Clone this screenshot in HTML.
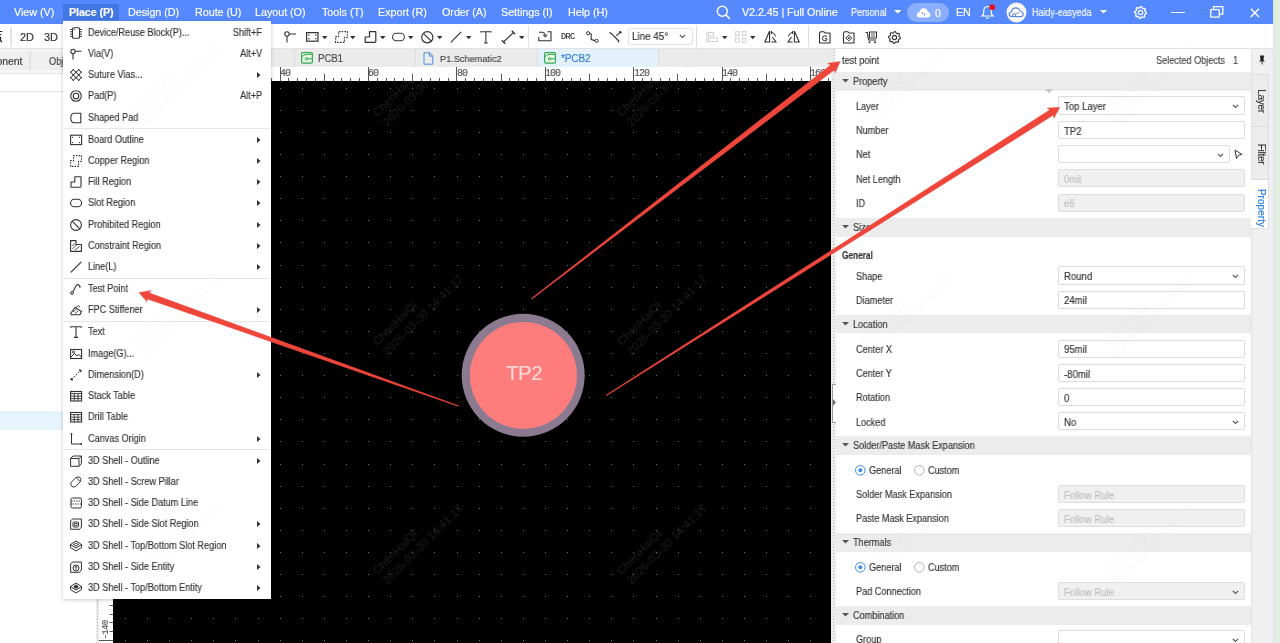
<!DOCTYPE html>
<html><head><meta charset="utf-8"><title>EasyEDA Pro</title>
<style>
html,body{margin:0;padding:0;width:1280px;height:643px;overflow:hidden;background:#fff;}
body{position:relative;font-family:'Liberation Sans',sans-serif;}
.t{position:absolute;white-space:nowrap;will-change:transform;-webkit-text-stroke:0.15px currentColor;}
.w{position:absolute;white-space:nowrap;}
.r{position:absolute;box-sizing:border-box;}
.s{position:absolute;overflow:visible;}
</style></head><body>

<div class="r" style="left:1273.00px;top:0.00px;width:7.00px;height:643.00px;background:#e3eee1;"></div>
<div class="r" style="left:1272.50px;top:0.00px;width:1.00px;height:643.00px;background:#d6e6f5;"></div>
<div class="r" style="left:0.00px;top:0.00px;width:1273.00px;height:24.00px;background:#5589fd;"></div>
<div class="r" style="left:0.00px;top:24.00px;width:1273.00px;height:24.00px;background:#fff;"></div>
<div class="r" style="left:0.00px;top:48.00px;width:1273.00px;height:1.00px;background:#e2e2e2;"></div>
<div class="r" style="left:0.00px;top:49.00px;width:96.00px;height:594.00px;background:#fff;"></div>
<div class="r" style="left:0.00px;top:49.00px;width:96.00px;height:3.00px;background:#f3f3f3;"></div>
<div class="r" style="left:0.00px;top:52.00px;width:96.00px;height:18.00px;background:#efefef;"></div>
<div class="r" style="left:29.00px;top:52.00px;width:2.00px;height:18.00px;background:#e2e2e2;"></div>
<div class="r" style="left:0.00px;top:70.00px;width:96.00px;height:4.00px;background:#f6f6f6;border-bottom:1px solid #e6e6e6;"></div>
<div class="t" style="left:-31.00px;top:51.00px;font-size:10.5px;line-height:21.0px;color:#3a3a3a;letter-spacing:-0.1px;font-weight:normal;font-family:'Liberation Sans', sans-serif;">Component</div>
<div class="t" style="left:48.60px;top:51.00px;font-size:10.5px;line-height:21.0px;color:#3a3a3a;letter-spacing:0px;font-weight:normal;font-family:'Liberation Sans', sans-serif;transform:scaleX(0.876);transform-origin:left center;">Obj</div>
<div class="r" style="left:0.00px;top:91.00px;width:96.00px;height:1.00px;background:#e3e3e3;"></div>
<div class="r" style="left:0.00px;top:411.00px;width:96.00px;height:19.00px;background:#e6f4fe;"></div>
<div class="r" style="left:96.00px;top:49.00px;width:3.00px;height:594.00px;background:#ececec;"></div>
<div class="r" style="left:97px;top:49px;width:1px;height:594px;background:repeating-linear-gradient(#bdbdbd 0 1px,transparent 1px 3px);"></div>
<div class="r" style="left:99.00px;top:49.00px;width:731.50px;height:18.00px;background:#ebebeb;"></div>
<div class="r" style="left:294.00px;top:49.00px;width:1.00px;height:18.00px;background:#dcdcdc;"></div>
<div class="r" style="left:415.00px;top:49.00px;width:1.00px;height:18.00px;background:#dcdcdc;"></div>
<div class="r" style="left:537.00px;top:49.00px;width:1.00px;height:18.00px;background:#dcdcdc;"></div>
<div class="r" style="left:658.00px;top:49.00px;width:1.00px;height:18.00px;background:#dcdcdc;"></div>
<div class="r" style="left:538.00px;top:49.00px;width:120.00px;height:18.00px;background:#e3f1fd;"></div>
<svg class="s" style="left:301.00px;top:52.00px;" width="12" height="12" viewBox="0 0 12 12"><rect x="0.6" y="0.6" width="10.8" height="10.6" rx="1.2" fill="#e9f9e6" stroke="#35a852" stroke-width="1.2"/><path d="M0.6 5.2 Q2.5 2.4 6 2.4 L11.4 2.4" fill="none" stroke="#35a852" stroke-width="1"/><circle cx="5.6" cy="6.8" r="1.3" fill="none" stroke="#35a852" stroke-width="1"/><path d="M6.9 6.8 L11.4 6.8" stroke="#35a852" stroke-width="1"/></svg>
<div class="t" style="left:318.00px;top:48.50px;font-size:10px;line-height:20px;color:#444;letter-spacing:0px;font-weight:normal;font-family:'Liberation Sans', sans-serif;transform:scaleX(0.957);transform-origin:left center;">PCB1</div>
<svg class="s" style="left:423.00px;top:52.00px;" width="11" height="13" viewBox="0 0 11 13"><path d="M1 0.8 L6.5 0.8 L9.8 4.1 L9.8 12.2 L1 12.2 Z" fill="none" stroke="#4a90e2" stroke-width="1"/><path d="M6.5 0.8 L6.5 4.1 L9.8 4.1" fill="none" stroke="#4a90e2" stroke-width="1"/></svg>
<div class="t" style="left:439.50px;top:48.90px;font-size:9.6px;line-height:19.2px;color:#444;letter-spacing:0px;font-weight:normal;font-family:'Liberation Sans', sans-serif;transform:scaleX(0.955);transform-origin:left center;">P1.Schematic2</div>
<svg class="s" style="left:544.00px;top:52.00px;" width="12" height="12" viewBox="0 0 12 12"><rect x="0.6" y="0.6" width="10.8" height="10.6" rx="1.2" fill="#e9f9e6" stroke="#35a852" stroke-width="1.2"/><path d="M0.6 5.2 Q2.5 2.4 6 2.4 L11.4 2.4" fill="none" stroke="#35a852" stroke-width="1"/><circle cx="5.6" cy="6.8" r="1.3" fill="none" stroke="#35a852" stroke-width="1"/><path d="M6.9 6.8 L11.4 6.8" stroke="#35a852" stroke-width="1"/></svg>
<div class="t" style="left:561.00px;top:48.50px;font-size:10px;line-height:20px;color:#2f7fd8;letter-spacing:-0.1px;font-weight:normal;font-family:'Liberation Sans', sans-serif;">*PCB2</div>
<div class="r" style="left:830.50px;top:49.00px;width:5.50px;height:594.00px;background:#eeeeee;"></div>
<div class="r" style="left:833px;top:49px;width:1px;height:594px;background:repeating-linear-gradient(#b8b8b8 0 1px,transparent 1px 3px);"></div>
<div class="r" style="left:832.00px;top:384.00px;width:4.00px;height:38.50px;background:#fff;border:1px solid #9a9a9a;border-right:none;"></div>
<svg class="s" style="left:832.60px;top:399.00px;" width="3" height="7" viewBox="0 0 3 7"><path d="M0 0 L2.8 3.5 L0 7 Z" fill="#6a6a6a"/></svg>
<div class="r" style="left:99.00px;top:67.00px;width:731.50px;height:14.00px;background:#fff;"></div>
<div class="r" style="left:99.00px;top:81.00px;width:14.00px;height:562.00px;background:#fff;"></div>
<div class="r" style="left:113.00px;top:81.00px;width:717.50px;height:562.00px;background:#000;"></div>
<svg class="s" style="left:113.00px;top:67.00px;" width="718" height="14" viewBox="0 0 718 14"><rect x="7" y="11" width="1" height="3" fill="#555"/><rect x="16" y="11" width="1" height="3" fill="#555"/><rect x="25" y="11" width="1" height="3" fill="#555"/><rect x="34" y="7" width="1" height="7" fill="#555"/><rect x="43" y="11" width="1" height="3" fill="#555"/><rect x="52" y="11" width="1" height="3" fill="#555"/><rect x="60" y="11" width="1" height="3" fill="#555"/><rect x="69" y="11" width="1" height="3" fill="#555"/><rect x="78" y="0" width="1" height="14" fill="#555"/><rect x="87" y="11" width="1" height="3" fill="#555"/><rect x="96" y="11" width="1" height="3" fill="#555"/><rect x="105" y="11" width="1" height="3" fill="#555"/><rect x="113" y="11" width="1" height="3" fill="#555"/><rect x="122" y="7" width="1" height="7" fill="#555"/><rect x="131" y="11" width="1" height="3" fill="#555"/><rect x="140" y="11" width="1" height="3" fill="#555"/><rect x="149" y="11" width="1" height="3" fill="#555"/><rect x="158" y="11" width="1" height="3" fill="#555"/><rect x="167" y="0" width="1" height="14" fill="#555"/><rect x="175" y="11" width="1" height="3" fill="#555"/><rect x="184" y="11" width="1" height="3" fill="#555"/><rect x="193" y="11" width="1" height="3" fill="#555"/><rect x="202" y="11" width="1" height="3" fill="#555"/><rect x="211" y="7" width="1" height="7" fill="#555"/><rect x="220" y="11" width="1" height="3" fill="#555"/><rect x="228" y="11" width="1" height="3" fill="#555"/><rect x="237" y="11" width="1" height="3" fill="#555"/><rect x="246" y="11" width="1" height="3" fill="#555"/><rect x="255" y="0" width="1" height="14" fill="#555"/><rect x="264" y="11" width="1" height="3" fill="#555"/><rect x="273" y="11" width="1" height="3" fill="#555"/><rect x="281" y="11" width="1" height="3" fill="#555"/><rect x="290" y="11" width="1" height="3" fill="#555"/><rect x="299" y="7" width="1" height="7" fill="#555"/><rect x="308" y="11" width="1" height="3" fill="#555"/><rect x="317" y="11" width="1" height="3" fill="#555"/><rect x="326" y="11" width="1" height="3" fill="#555"/><rect x="335" y="11" width="1" height="3" fill="#555"/><rect x="343" y="0" width="1" height="14" fill="#555"/><rect x="352" y="11" width="1" height="3" fill="#555"/><rect x="361" y="11" width="1" height="3" fill="#555"/><rect x="370" y="11" width="1" height="3" fill="#555"/><rect x="379" y="11" width="1" height="3" fill="#555"/><rect x="388" y="7" width="1" height="7" fill="#555"/><rect x="396" y="11" width="1" height="3" fill="#555"/><rect x="405" y="11" width="1" height="3" fill="#555"/><rect x="414" y="11" width="1" height="3" fill="#555"/><rect x="423" y="11" width="1" height="3" fill="#555"/><rect x="432" y="0" width="1" height="14" fill="#555"/><rect x="441" y="11" width="1" height="3" fill="#555"/><rect x="449" y="11" width="1" height="3" fill="#555"/><rect x="458" y="11" width="1" height="3" fill="#555"/><rect x="467" y="11" width="1" height="3" fill="#555"/><rect x="476" y="7" width="1" height="7" fill="#555"/><rect x="485" y="11" width="1" height="3" fill="#555"/><rect x="494" y="11" width="1" height="3" fill="#555"/><rect x="503" y="11" width="1" height="3" fill="#555"/><rect x="511" y="11" width="1" height="3" fill="#555"/><rect x="520" y="0" width="1" height="14" fill="#555"/><rect x="529" y="11" width="1" height="3" fill="#555"/><rect x="538" y="11" width="1" height="3" fill="#555"/><rect x="547" y="11" width="1" height="3" fill="#555"/><rect x="556" y="11" width="1" height="3" fill="#555"/><rect x="564" y="7" width="1" height="7" fill="#555"/><rect x="573" y="11" width="1" height="3" fill="#555"/><rect x="582" y="11" width="1" height="3" fill="#555"/><rect x="591" y="11" width="1" height="3" fill="#555"/><rect x="600" y="11" width="1" height="3" fill="#555"/><rect x="609" y="0" width="1" height="14" fill="#555"/><rect x="617" y="11" width="1" height="3" fill="#555"/><rect x="626" y="11" width="1" height="3" fill="#555"/><rect x="635" y="11" width="1" height="3" fill="#555"/><rect x="644" y="11" width="1" height="3" fill="#555"/><rect x="653" y="7" width="1" height="7" fill="#555"/><rect x="662" y="11" width="1" height="3" fill="#555"/><rect x="671" y="11" width="1" height="3" fill="#555"/><rect x="679" y="11" width="1" height="3" fill="#555"/><rect x="688" y="11" width="1" height="3" fill="#555"/><rect x="697" y="0" width="1" height="14" fill="#555"/><rect x="706" y="11" width="1" height="3" fill="#555"/><rect x="715" y="11" width="1" height="3" fill="#555"/></svg>
<div class="r" style="left:113px;top:67px;width:717.5px;height:14px;overflow:hidden;"><div class="r" style="left:-113px;top:-67px;width:1280px;height:643px;">
<div class="t" style="left:279.90px;top:64.40px;font-size:10px;line-height:20px;color:#555;letter-spacing:-1.0px;font-weight:normal;font-family:'Liberation Mono', monospace;">40</div>
<div class="t" style="left:368.33px;top:64.40px;font-size:10px;line-height:20px;color:#555;letter-spacing:-1.0px;font-weight:normal;font-family:'Liberation Mono', monospace;">60</div>
<div class="t" style="left:456.76px;top:64.40px;font-size:10px;line-height:20px;color:#555;letter-spacing:-1.0px;font-weight:normal;font-family:'Liberation Mono', monospace;">80</div>
<div class="t" style="left:545.19px;top:64.40px;font-size:10px;line-height:20px;color:#555;letter-spacing:-1.0px;font-weight:normal;font-family:'Liberation Mono', monospace;">100</div>
<div class="t" style="left:633.62px;top:64.40px;font-size:10px;line-height:20px;color:#555;letter-spacing:-1.0px;font-weight:normal;font-family:'Liberation Mono', monospace;">120</div>
<div class="t" style="left:722.05px;top:64.40px;font-size:10px;line-height:20px;color:#555;letter-spacing:-1.0px;font-weight:normal;font-family:'Liberation Mono', monospace;">140</div>
<div class="t" style="left:810.48px;top:64.40px;font-size:10px;line-height:20px;color:#555;letter-spacing:-1.0px;font-weight:normal;font-family:'Liberation Mono', monospace;">160</div>
</div></div>
<svg class="s" style="left:99.00px;top:81.00px;" width="14" height="562" viewBox="0 0 14 562"><rect x="0" y="559" width="14" height="1" fill="#555"/><rect x="10.5" y="550" width="3.5" height="1" fill="#555"/><rect x="10.5" y="541" width="3.5" height="1" fill="#555"/><rect x="10.5" y="533" width="3.5" height="1" fill="#555"/><rect x="10.5" y="524" width="3.5" height="1" fill="#555"/><rect x="7" y="515" width="7" height="1" fill="#555"/><rect x="10.5" y="506" width="3.5" height="1" fill="#555"/><rect x="10.5" y="497" width="3.5" height="1" fill="#555"/><rect x="10.5" y="488" width="3.5" height="1" fill="#555"/><rect x="10.5" y="480" width="3.5" height="1" fill="#555"/><rect x="0" y="471" width="14" height="1" fill="#555"/><rect x="10.5" y="462" width="3.5" height="1" fill="#555"/><rect x="10.5" y="453" width="3.5" height="1" fill="#555"/><rect x="10.5" y="444" width="3.5" height="1" fill="#555"/><rect x="10.5" y="435" width="3.5" height="1" fill="#555"/><rect x="7" y="426" width="7" height="1" fill="#555"/><rect x="10.5" y="418" width="3.5" height="1" fill="#555"/><rect x="10.5" y="409" width="3.5" height="1" fill="#555"/><rect x="10.5" y="400" width="3.5" height="1" fill="#555"/><rect x="10.5" y="391" width="3.5" height="1" fill="#555"/><rect x="0" y="382" width="14" height="1" fill="#555"/><rect x="10.5" y="373" width="3.5" height="1" fill="#555"/><rect x="10.5" y="365" width="3.5" height="1" fill="#555"/><rect x="10.5" y="356" width="3.5" height="1" fill="#555"/><rect x="10.5" y="347" width="3.5" height="1" fill="#555"/><rect x="7" y="338" width="7" height="1" fill="#555"/><rect x="10.5" y="329" width="3.5" height="1" fill="#555"/><rect x="10.5" y="320" width="3.5" height="1" fill="#555"/><rect x="10.5" y="311" width="3.5" height="1" fill="#555"/><rect x="10.5" y="303" width="3.5" height="1" fill="#555"/><rect x="0" y="294" width="14" height="1" fill="#555"/><rect x="10.5" y="285" width="3.5" height="1" fill="#555"/><rect x="10.5" y="276" width="3.5" height="1" fill="#555"/><rect x="10.5" y="267" width="3.5" height="1" fill="#555"/><rect x="10.5" y="258" width="3.5" height="1" fill="#555"/><rect x="7" y="250" width="7" height="1" fill="#555"/><rect x="10.5" y="241" width="3.5" height="1" fill="#555"/><rect x="10.5" y="232" width="3.5" height="1" fill="#555"/><rect x="10.5" y="223" width="3.5" height="1" fill="#555"/><rect x="10.5" y="214" width="3.5" height="1" fill="#555"/><rect x="0" y="205" width="14" height="1" fill="#555"/><rect x="10.5" y="197" width="3.5" height="1" fill="#555"/><rect x="10.5" y="188" width="3.5" height="1" fill="#555"/><rect x="10.5" y="179" width="3.5" height="1" fill="#555"/><rect x="10.5" y="170" width="3.5" height="1" fill="#555"/><rect x="7" y="161" width="7" height="1" fill="#555"/><rect x="10.5" y="152" width="3.5" height="1" fill="#555"/><rect x="10.5" y="143" width="3.5" height="1" fill="#555"/><rect x="10.5" y="135" width="3.5" height="1" fill="#555"/><rect x="10.5" y="126" width="3.5" height="1" fill="#555"/><rect x="0" y="117" width="14" height="1" fill="#555"/><rect x="10.5" y="108" width="3.5" height="1" fill="#555"/><rect x="10.5" y="99" width="3.5" height="1" fill="#555"/><rect x="10.5" y="90" width="3.5" height="1" fill="#555"/><rect x="10.5" y="82" width="3.5" height="1" fill="#555"/><rect x="7" y="73" width="7" height="1" fill="#555"/><rect x="10.5" y="64" width="3.5" height="1" fill="#555"/><rect x="10.5" y="55" width="3.5" height="1" fill="#555"/><rect x="10.5" y="46" width="3.5" height="1" fill="#555"/><rect x="10.5" y="37" width="3.5" height="1" fill="#555"/><rect x="0" y="29" width="14" height="1" fill="#555"/><rect x="10.5" y="20" width="3.5" height="1" fill="#555"/><rect x="10.5" y="11" width="3.5" height="1" fill="#555"/><rect x="10.5" y="2" width="3.5" height="1" fill="#555"/></svg>
<div class="t" style="left:94px;top:624.5px;width:24px;height:10px;font-size:9px;line-height:10px;color:#555;letter-spacing:-0.6px;font-family:'Liberation Mono',monospace;transform:rotate(-90deg);text-align:center;">-140</div>
<svg class="s" style="left:113.00px;top:81.00px;" width="718" height="562" viewBox="0 0 718 562"><g fill="#6c6c6c"><rect x="12" y="7" width="1" height="1"/><rect x="12" y="29" width="1" height="1"/><rect x="12" y="51" width="1" height="1"/><rect x="12" y="73" width="1" height="1"/><rect x="12" y="95" width="1" height="1"/><rect x="12" y="117" width="1" height="1"/><rect x="12" y="139" width="1" height="1"/><rect x="12" y="161" width="1" height="1"/><rect x="12" y="184" width="1" height="1"/><rect x="12" y="206" width="1" height="1"/><rect x="12" y="228" width="1" height="1"/><rect x="12" y="250" width="1" height="1"/><rect x="12" y="272" width="1" height="1"/><rect x="12" y="294" width="1" height="1"/><rect x="12" y="316" width="1" height="1"/><rect x="12" y="338" width="1" height="1"/><rect x="12" y="360" width="1" height="1"/><rect x="12" y="383" width="1" height="1"/><rect x="12" y="405" width="1" height="1"/><rect x="12" y="427" width="1" height="1"/><rect x="12" y="449" width="1" height="1"/><rect x="12" y="471" width="1" height="1"/><rect x="12" y="493" width="1" height="1"/><rect x="12" y="515" width="1" height="1"/><rect x="12" y="537" width="1" height="1"/><rect x="12" y="559" width="1" height="1"/><rect x="34" y="7" width="1" height="1"/><rect x="34" y="29" width="1" height="1"/><rect x="34" y="51" width="1" height="1"/><rect x="34" y="73" width="1" height="1"/><rect x="34" y="95" width="1" height="1"/><rect x="34" y="117" width="1" height="1"/><rect x="34" y="139" width="1" height="1"/><rect x="34" y="161" width="1" height="1"/><rect x="34" y="184" width="1" height="1"/><rect x="34" y="206" width="1" height="1"/><rect x="34" y="228" width="1" height="1"/><rect x="34" y="250" width="1" height="1"/><rect x="34" y="272" width="1" height="1"/><rect x="34" y="294" width="1" height="1"/><rect x="34" y="316" width="1" height="1"/><rect x="34" y="338" width="1" height="1"/><rect x="34" y="360" width="1" height="1"/><rect x="34" y="383" width="1" height="1"/><rect x="34" y="405" width="1" height="1"/><rect x="34" y="427" width="1" height="1"/><rect x="34" y="449" width="1" height="1"/><rect x="34" y="471" width="1" height="1"/><rect x="34" y="493" width="1" height="1"/><rect x="34" y="515" width="1" height="1"/><rect x="34" y="537" width="1" height="1"/><rect x="34" y="559" width="1" height="1"/><rect x="56" y="7" width="1" height="1"/><rect x="56" y="29" width="1" height="1"/><rect x="56" y="51" width="1" height="1"/><rect x="56" y="73" width="1" height="1"/><rect x="56" y="95" width="1" height="1"/><rect x="56" y="117" width="1" height="1"/><rect x="56" y="139" width="1" height="1"/><rect x="56" y="161" width="1" height="1"/><rect x="56" y="184" width="1" height="1"/><rect x="56" y="206" width="1" height="1"/><rect x="56" y="228" width="1" height="1"/><rect x="56" y="250" width="1" height="1"/><rect x="56" y="272" width="1" height="1"/><rect x="56" y="294" width="1" height="1"/><rect x="56" y="316" width="1" height="1"/><rect x="56" y="338" width="1" height="1"/><rect x="56" y="360" width="1" height="1"/><rect x="56" y="383" width="1" height="1"/><rect x="56" y="405" width="1" height="1"/><rect x="56" y="427" width="1" height="1"/><rect x="56" y="449" width="1" height="1"/><rect x="56" y="471" width="1" height="1"/><rect x="56" y="493" width="1" height="1"/><rect x="56" y="515" width="1" height="1"/><rect x="56" y="537" width="1" height="1"/><rect x="56" y="559" width="1" height="1"/><rect x="78" y="7" width="1" height="1"/><rect x="78" y="29" width="1" height="1"/><rect x="78" y="51" width="1" height="1"/><rect x="78" y="73" width="1" height="1"/><rect x="78" y="95" width="1" height="1"/><rect x="78" y="117" width="1" height="1"/><rect x="78" y="139" width="1" height="1"/><rect x="78" y="161" width="1" height="1"/><rect x="78" y="184" width="1" height="1"/><rect x="78" y="206" width="1" height="1"/><rect x="78" y="228" width="1" height="1"/><rect x="78" y="250" width="1" height="1"/><rect x="78" y="272" width="1" height="1"/><rect x="78" y="294" width="1" height="1"/><rect x="78" y="316" width="1" height="1"/><rect x="78" y="338" width="1" height="1"/><rect x="78" y="360" width="1" height="1"/><rect x="78" y="383" width="1" height="1"/><rect x="78" y="405" width="1" height="1"/><rect x="78" y="427" width="1" height="1"/><rect x="78" y="449" width="1" height="1"/><rect x="78" y="471" width="1" height="1"/><rect x="78" y="493" width="1" height="1"/><rect x="78" y="515" width="1" height="1"/><rect x="78" y="537" width="1" height="1"/><rect x="78" y="559" width="1" height="1"/><rect x="100" y="7" width="1" height="1"/><rect x="100" y="29" width="1" height="1"/><rect x="100" y="51" width="1" height="1"/><rect x="100" y="73" width="1" height="1"/><rect x="100" y="95" width="1" height="1"/><rect x="100" y="117" width="1" height="1"/><rect x="100" y="139" width="1" height="1"/><rect x="100" y="161" width="1" height="1"/><rect x="100" y="184" width="1" height="1"/><rect x="100" y="206" width="1" height="1"/><rect x="100" y="228" width="1" height="1"/><rect x="100" y="250" width="1" height="1"/><rect x="100" y="272" width="1" height="1"/><rect x="100" y="294" width="1" height="1"/><rect x="100" y="316" width="1" height="1"/><rect x="100" y="338" width="1" height="1"/><rect x="100" y="360" width="1" height="1"/><rect x="100" y="383" width="1" height="1"/><rect x="100" y="405" width="1" height="1"/><rect x="100" y="427" width="1" height="1"/><rect x="100" y="449" width="1" height="1"/><rect x="100" y="471" width="1" height="1"/><rect x="100" y="493" width="1" height="1"/><rect x="100" y="515" width="1" height="1"/><rect x="100" y="537" width="1" height="1"/><rect x="100" y="559" width="1" height="1"/><rect x="122" y="7" width="1" height="1"/><rect x="122" y="29" width="1" height="1"/><rect x="122" y="51" width="1" height="1"/><rect x="122" y="73" width="1" height="1"/><rect x="122" y="95" width="1" height="1"/><rect x="122" y="117" width="1" height="1"/><rect x="122" y="139" width="1" height="1"/><rect x="122" y="161" width="1" height="1"/><rect x="122" y="184" width="1" height="1"/><rect x="122" y="206" width="1" height="1"/><rect x="122" y="228" width="1" height="1"/><rect x="122" y="250" width="1" height="1"/><rect x="122" y="272" width="1" height="1"/><rect x="122" y="294" width="1" height="1"/><rect x="122" y="316" width="1" height="1"/><rect x="122" y="338" width="1" height="1"/><rect x="122" y="360" width="1" height="1"/><rect x="122" y="383" width="1" height="1"/><rect x="122" y="405" width="1" height="1"/><rect x="122" y="427" width="1" height="1"/><rect x="122" y="449" width="1" height="1"/><rect x="122" y="471" width="1" height="1"/><rect x="122" y="493" width="1" height="1"/><rect x="122" y="515" width="1" height="1"/><rect x="122" y="537" width="1" height="1"/><rect x="122" y="559" width="1" height="1"/><rect x="145" y="7" width="1" height="1"/><rect x="145" y="29" width="1" height="1"/><rect x="145" y="51" width="1" height="1"/><rect x="145" y="73" width="1" height="1"/><rect x="145" y="95" width="1" height="1"/><rect x="145" y="117" width="1" height="1"/><rect x="145" y="139" width="1" height="1"/><rect x="145" y="161" width="1" height="1"/><rect x="145" y="184" width="1" height="1"/><rect x="145" y="206" width="1" height="1"/><rect x="145" y="228" width="1" height="1"/><rect x="145" y="250" width="1" height="1"/><rect x="145" y="272" width="1" height="1"/><rect x="145" y="294" width="1" height="1"/><rect x="145" y="316" width="1" height="1"/><rect x="145" y="338" width="1" height="1"/><rect x="145" y="360" width="1" height="1"/><rect x="145" y="383" width="1" height="1"/><rect x="145" y="405" width="1" height="1"/><rect x="145" y="427" width="1" height="1"/><rect x="145" y="449" width="1" height="1"/><rect x="145" y="471" width="1" height="1"/><rect x="145" y="493" width="1" height="1"/><rect x="145" y="515" width="1" height="1"/><rect x="145" y="537" width="1" height="1"/><rect x="145" y="559" width="1" height="1"/><rect x="167" y="7" width="1" height="1"/><rect x="167" y="29" width="1" height="1"/><rect x="167" y="51" width="1" height="1"/><rect x="167" y="73" width="1" height="1"/><rect x="167" y="95" width="1" height="1"/><rect x="167" y="117" width="1" height="1"/><rect x="167" y="139" width="1" height="1"/><rect x="167" y="161" width="1" height="1"/><rect x="167" y="184" width="1" height="1"/><rect x="167" y="206" width="1" height="1"/><rect x="167" y="228" width="1" height="1"/><rect x="167" y="250" width="1" height="1"/><rect x="167" y="272" width="1" height="1"/><rect x="167" y="294" width="1" height="1"/><rect x="167" y="316" width="1" height="1"/><rect x="167" y="338" width="1" height="1"/><rect x="167" y="360" width="1" height="1"/><rect x="167" y="383" width="1" height="1"/><rect x="167" y="405" width="1" height="1"/><rect x="167" y="427" width="1" height="1"/><rect x="167" y="449" width="1" height="1"/><rect x="167" y="471" width="1" height="1"/><rect x="167" y="493" width="1" height="1"/><rect x="167" y="515" width="1" height="1"/><rect x="167" y="537" width="1" height="1"/><rect x="167" y="559" width="1" height="1"/><rect x="189" y="7" width="1" height="1"/><rect x="189" y="29" width="1" height="1"/><rect x="189" y="51" width="1" height="1"/><rect x="189" y="73" width="1" height="1"/><rect x="189" y="95" width="1" height="1"/><rect x="189" y="117" width="1" height="1"/><rect x="189" y="139" width="1" height="1"/><rect x="189" y="161" width="1" height="1"/><rect x="189" y="184" width="1" height="1"/><rect x="189" y="206" width="1" height="1"/><rect x="189" y="228" width="1" height="1"/><rect x="189" y="250" width="1" height="1"/><rect x="189" y="272" width="1" height="1"/><rect x="189" y="294" width="1" height="1"/><rect x="189" y="316" width="1" height="1"/><rect x="189" y="338" width="1" height="1"/><rect x="189" y="360" width="1" height="1"/><rect x="189" y="383" width="1" height="1"/><rect x="189" y="405" width="1" height="1"/><rect x="189" y="427" width="1" height="1"/><rect x="189" y="449" width="1" height="1"/><rect x="189" y="471" width="1" height="1"/><rect x="189" y="493" width="1" height="1"/><rect x="189" y="515" width="1" height="1"/><rect x="189" y="537" width="1" height="1"/><rect x="189" y="559" width="1" height="1"/><rect x="211" y="7" width="1" height="1"/><rect x="211" y="29" width="1" height="1"/><rect x="211" y="51" width="1" height="1"/><rect x="211" y="73" width="1" height="1"/><rect x="211" y="95" width="1" height="1"/><rect x="211" y="117" width="1" height="1"/><rect x="211" y="139" width="1" height="1"/><rect x="211" y="161" width="1" height="1"/><rect x="211" y="184" width="1" height="1"/><rect x="211" y="206" width="1" height="1"/><rect x="211" y="228" width="1" height="1"/><rect x="211" y="250" width="1" height="1"/><rect x="211" y="272" width="1" height="1"/><rect x="211" y="294" width="1" height="1"/><rect x="211" y="316" width="1" height="1"/><rect x="211" y="338" width="1" height="1"/><rect x="211" y="360" width="1" height="1"/><rect x="211" y="383" width="1" height="1"/><rect x="211" y="405" width="1" height="1"/><rect x="211" y="427" width="1" height="1"/><rect x="211" y="449" width="1" height="1"/><rect x="211" y="471" width="1" height="1"/><rect x="211" y="493" width="1" height="1"/><rect x="211" y="515" width="1" height="1"/><rect x="211" y="537" width="1" height="1"/><rect x="211" y="559" width="1" height="1"/><rect x="233" y="7" width="1" height="1"/><rect x="233" y="29" width="1" height="1"/><rect x="233" y="51" width="1" height="1"/><rect x="233" y="73" width="1" height="1"/><rect x="233" y="95" width="1" height="1"/><rect x="233" y="117" width="1" height="1"/><rect x="233" y="139" width="1" height="1"/><rect x="233" y="161" width="1" height="1"/><rect x="233" y="184" width="1" height="1"/><rect x="233" y="206" width="1" height="1"/><rect x="233" y="228" width="1" height="1"/><rect x="233" y="250" width="1" height="1"/><rect x="233" y="272" width="1" height="1"/><rect x="233" y="294" width="1" height="1"/><rect x="233" y="316" width="1" height="1"/><rect x="233" y="338" width="1" height="1"/><rect x="233" y="360" width="1" height="1"/><rect x="233" y="383" width="1" height="1"/><rect x="233" y="405" width="1" height="1"/><rect x="233" y="427" width="1" height="1"/><rect x="233" y="449" width="1" height="1"/><rect x="233" y="471" width="1" height="1"/><rect x="233" y="493" width="1" height="1"/><rect x="233" y="515" width="1" height="1"/><rect x="233" y="537" width="1" height="1"/><rect x="233" y="559" width="1" height="1"/><rect x="255" y="7" width="1" height="1"/><rect x="255" y="29" width="1" height="1"/><rect x="255" y="51" width="1" height="1"/><rect x="255" y="73" width="1" height="1"/><rect x="255" y="95" width="1" height="1"/><rect x="255" y="117" width="1" height="1"/><rect x="255" y="139" width="1" height="1"/><rect x="255" y="161" width="1" height="1"/><rect x="255" y="184" width="1" height="1"/><rect x="255" y="206" width="1" height="1"/><rect x="255" y="228" width="1" height="1"/><rect x="255" y="250" width="1" height="1"/><rect x="255" y="272" width="1" height="1"/><rect x="255" y="294" width="1" height="1"/><rect x="255" y="316" width="1" height="1"/><rect x="255" y="338" width="1" height="1"/><rect x="255" y="360" width="1" height="1"/><rect x="255" y="383" width="1" height="1"/><rect x="255" y="405" width="1" height="1"/><rect x="255" y="427" width="1" height="1"/><rect x="255" y="449" width="1" height="1"/><rect x="255" y="471" width="1" height="1"/><rect x="255" y="493" width="1" height="1"/><rect x="255" y="515" width="1" height="1"/><rect x="255" y="537" width="1" height="1"/><rect x="255" y="559" width="1" height="1"/><rect x="277" y="7" width="1" height="1"/><rect x="277" y="29" width="1" height="1"/><rect x="277" y="51" width="1" height="1"/><rect x="277" y="73" width="1" height="1"/><rect x="277" y="95" width="1" height="1"/><rect x="277" y="117" width="1" height="1"/><rect x="277" y="139" width="1" height="1"/><rect x="277" y="161" width="1" height="1"/><rect x="277" y="184" width="1" height="1"/><rect x="277" y="206" width="1" height="1"/><rect x="277" y="228" width="1" height="1"/><rect x="277" y="250" width="1" height="1"/><rect x="277" y="272" width="1" height="1"/><rect x="277" y="294" width="1" height="1"/><rect x="277" y="316" width="1" height="1"/><rect x="277" y="338" width="1" height="1"/><rect x="277" y="360" width="1" height="1"/><rect x="277" y="383" width="1" height="1"/><rect x="277" y="405" width="1" height="1"/><rect x="277" y="427" width="1" height="1"/><rect x="277" y="449" width="1" height="1"/><rect x="277" y="471" width="1" height="1"/><rect x="277" y="493" width="1" height="1"/><rect x="277" y="515" width="1" height="1"/><rect x="277" y="537" width="1" height="1"/><rect x="277" y="559" width="1" height="1"/><rect x="299" y="7" width="1" height="1"/><rect x="299" y="29" width="1" height="1"/><rect x="299" y="51" width="1" height="1"/><rect x="299" y="73" width="1" height="1"/><rect x="299" y="95" width="1" height="1"/><rect x="299" y="117" width="1" height="1"/><rect x="299" y="139" width="1" height="1"/><rect x="299" y="161" width="1" height="1"/><rect x="299" y="184" width="1" height="1"/><rect x="299" y="206" width="1" height="1"/><rect x="299" y="228" width="1" height="1"/><rect x="299" y="250" width="1" height="1"/><rect x="299" y="272" width="1" height="1"/><rect x="299" y="294" width="1" height="1"/><rect x="299" y="316" width="1" height="1"/><rect x="299" y="338" width="1" height="1"/><rect x="299" y="360" width="1" height="1"/><rect x="299" y="383" width="1" height="1"/><rect x="299" y="405" width="1" height="1"/><rect x="299" y="427" width="1" height="1"/><rect x="299" y="449" width="1" height="1"/><rect x="299" y="471" width="1" height="1"/><rect x="299" y="493" width="1" height="1"/><rect x="299" y="515" width="1" height="1"/><rect x="299" y="537" width="1" height="1"/><rect x="299" y="559" width="1" height="1"/><rect x="321" y="7" width="1" height="1"/><rect x="321" y="29" width="1" height="1"/><rect x="321" y="51" width="1" height="1"/><rect x="321" y="73" width="1" height="1"/><rect x="321" y="95" width="1" height="1"/><rect x="321" y="117" width="1" height="1"/><rect x="321" y="139" width="1" height="1"/><rect x="321" y="161" width="1" height="1"/><rect x="321" y="184" width="1" height="1"/><rect x="321" y="206" width="1" height="1"/><rect x="321" y="228" width="1" height="1"/><rect x="321" y="250" width="1" height="1"/><rect x="321" y="272" width="1" height="1"/><rect x="321" y="294" width="1" height="1"/><rect x="321" y="316" width="1" height="1"/><rect x="321" y="338" width="1" height="1"/><rect x="321" y="360" width="1" height="1"/><rect x="321" y="383" width="1" height="1"/><rect x="321" y="405" width="1" height="1"/><rect x="321" y="427" width="1" height="1"/><rect x="321" y="449" width="1" height="1"/><rect x="321" y="471" width="1" height="1"/><rect x="321" y="493" width="1" height="1"/><rect x="321" y="515" width="1" height="1"/><rect x="321" y="537" width="1" height="1"/><rect x="321" y="559" width="1" height="1"/><rect x="344" y="7" width="1" height="1"/><rect x="344" y="29" width="1" height="1"/><rect x="344" y="51" width="1" height="1"/><rect x="344" y="73" width="1" height="1"/><rect x="344" y="95" width="1" height="1"/><rect x="344" y="117" width="1" height="1"/><rect x="344" y="139" width="1" height="1"/><rect x="344" y="161" width="1" height="1"/><rect x="344" y="184" width="1" height="1"/><rect x="344" y="206" width="1" height="1"/><rect x="344" y="228" width="1" height="1"/><rect x="344" y="250" width="1" height="1"/><rect x="344" y="272" width="1" height="1"/><rect x="344" y="294" width="1" height="1"/><rect x="344" y="316" width="1" height="1"/><rect x="344" y="338" width="1" height="1"/><rect x="344" y="360" width="1" height="1"/><rect x="344" y="383" width="1" height="1"/><rect x="344" y="405" width="1" height="1"/><rect x="344" y="427" width="1" height="1"/><rect x="344" y="449" width="1" height="1"/><rect x="344" y="471" width="1" height="1"/><rect x="344" y="493" width="1" height="1"/><rect x="344" y="515" width="1" height="1"/><rect x="344" y="537" width="1" height="1"/><rect x="344" y="559" width="1" height="1"/><rect x="366" y="7" width="1" height="1"/><rect x="366" y="29" width="1" height="1"/><rect x="366" y="51" width="1" height="1"/><rect x="366" y="73" width="1" height="1"/><rect x="366" y="95" width="1" height="1"/><rect x="366" y="117" width="1" height="1"/><rect x="366" y="139" width="1" height="1"/><rect x="366" y="161" width="1" height="1"/><rect x="366" y="184" width="1" height="1"/><rect x="366" y="206" width="1" height="1"/><rect x="366" y="228" width="1" height="1"/><rect x="366" y="250" width="1" height="1"/><rect x="366" y="272" width="1" height="1"/><rect x="366" y="294" width="1" height="1"/><rect x="366" y="316" width="1" height="1"/><rect x="366" y="338" width="1" height="1"/><rect x="366" y="360" width="1" height="1"/><rect x="366" y="383" width="1" height="1"/><rect x="366" y="405" width="1" height="1"/><rect x="366" y="427" width="1" height="1"/><rect x="366" y="449" width="1" height="1"/><rect x="366" y="471" width="1" height="1"/><rect x="366" y="493" width="1" height="1"/><rect x="366" y="515" width="1" height="1"/><rect x="366" y="537" width="1" height="1"/><rect x="366" y="559" width="1" height="1"/><rect x="388" y="7" width="1" height="1"/><rect x="388" y="29" width="1" height="1"/><rect x="388" y="51" width="1" height="1"/><rect x="388" y="73" width="1" height="1"/><rect x="388" y="95" width="1" height="1"/><rect x="388" y="117" width="1" height="1"/><rect x="388" y="139" width="1" height="1"/><rect x="388" y="161" width="1" height="1"/><rect x="388" y="184" width="1" height="1"/><rect x="388" y="206" width="1" height="1"/><rect x="388" y="228" width="1" height="1"/><rect x="388" y="250" width="1" height="1"/><rect x="388" y="272" width="1" height="1"/><rect x="388" y="294" width="1" height="1"/><rect x="388" y="316" width="1" height="1"/><rect x="388" y="338" width="1" height="1"/><rect x="388" y="360" width="1" height="1"/><rect x="388" y="383" width="1" height="1"/><rect x="388" y="405" width="1" height="1"/><rect x="388" y="427" width="1" height="1"/><rect x="388" y="449" width="1" height="1"/><rect x="388" y="471" width="1" height="1"/><rect x="388" y="493" width="1" height="1"/><rect x="388" y="515" width="1" height="1"/><rect x="388" y="537" width="1" height="1"/><rect x="388" y="559" width="1" height="1"/><rect x="410" y="7" width="1" height="1"/><rect x="410" y="29" width="1" height="1"/><rect x="410" y="51" width="1" height="1"/><rect x="410" y="73" width="1" height="1"/><rect x="410" y="95" width="1" height="1"/><rect x="410" y="117" width="1" height="1"/><rect x="410" y="139" width="1" height="1"/><rect x="410" y="161" width="1" height="1"/><rect x="410" y="184" width="1" height="1"/><rect x="410" y="206" width="1" height="1"/><rect x="410" y="228" width="1" height="1"/><rect x="410" y="250" width="1" height="1"/><rect x="410" y="272" width="1" height="1"/><rect x="410" y="294" width="1" height="1"/><rect x="410" y="316" width="1" height="1"/><rect x="410" y="338" width="1" height="1"/><rect x="410" y="360" width="1" height="1"/><rect x="410" y="383" width="1" height="1"/><rect x="410" y="405" width="1" height="1"/><rect x="410" y="427" width="1" height="1"/><rect x="410" y="449" width="1" height="1"/><rect x="410" y="471" width="1" height="1"/><rect x="410" y="493" width="1" height="1"/><rect x="410" y="515" width="1" height="1"/><rect x="410" y="537" width="1" height="1"/><rect x="410" y="559" width="1" height="1"/><rect x="432" y="7" width="1" height="1"/><rect x="432" y="29" width="1" height="1"/><rect x="432" y="51" width="1" height="1"/><rect x="432" y="73" width="1" height="1"/><rect x="432" y="95" width="1" height="1"/><rect x="432" y="117" width="1" height="1"/><rect x="432" y="139" width="1" height="1"/><rect x="432" y="161" width="1" height="1"/><rect x="432" y="184" width="1" height="1"/><rect x="432" y="206" width="1" height="1"/><rect x="432" y="228" width="1" height="1"/><rect x="432" y="250" width="1" height="1"/><rect x="432" y="272" width="1" height="1"/><rect x="432" y="294" width="1" height="1"/><rect x="432" y="316" width="1" height="1"/><rect x="432" y="338" width="1" height="1"/><rect x="432" y="360" width="1" height="1"/><rect x="432" y="383" width="1" height="1"/><rect x="432" y="405" width="1" height="1"/><rect x="432" y="427" width="1" height="1"/><rect x="432" y="449" width="1" height="1"/><rect x="432" y="471" width="1" height="1"/><rect x="432" y="493" width="1" height="1"/><rect x="432" y="515" width="1" height="1"/><rect x="432" y="537" width="1" height="1"/><rect x="432" y="559" width="1" height="1"/><rect x="454" y="7" width="1" height="1"/><rect x="454" y="29" width="1" height="1"/><rect x="454" y="51" width="1" height="1"/><rect x="454" y="73" width="1" height="1"/><rect x="454" y="95" width="1" height="1"/><rect x="454" y="117" width="1" height="1"/><rect x="454" y="139" width="1" height="1"/><rect x="454" y="161" width="1" height="1"/><rect x="454" y="184" width="1" height="1"/><rect x="454" y="206" width="1" height="1"/><rect x="454" y="228" width="1" height="1"/><rect x="454" y="250" width="1" height="1"/><rect x="454" y="272" width="1" height="1"/><rect x="454" y="294" width="1" height="1"/><rect x="454" y="316" width="1" height="1"/><rect x="454" y="338" width="1" height="1"/><rect x="454" y="360" width="1" height="1"/><rect x="454" y="383" width="1" height="1"/><rect x="454" y="405" width="1" height="1"/><rect x="454" y="427" width="1" height="1"/><rect x="454" y="449" width="1" height="1"/><rect x="454" y="471" width="1" height="1"/><rect x="454" y="493" width="1" height="1"/><rect x="454" y="515" width="1" height="1"/><rect x="454" y="537" width="1" height="1"/><rect x="454" y="559" width="1" height="1"/><rect x="476" y="7" width="1" height="1"/><rect x="476" y="29" width="1" height="1"/><rect x="476" y="51" width="1" height="1"/><rect x="476" y="73" width="1" height="1"/><rect x="476" y="95" width="1" height="1"/><rect x="476" y="117" width="1" height="1"/><rect x="476" y="139" width="1" height="1"/><rect x="476" y="161" width="1" height="1"/><rect x="476" y="184" width="1" height="1"/><rect x="476" y="206" width="1" height="1"/><rect x="476" y="228" width="1" height="1"/><rect x="476" y="250" width="1" height="1"/><rect x="476" y="272" width="1" height="1"/><rect x="476" y="294" width="1" height="1"/><rect x="476" y="316" width="1" height="1"/><rect x="476" y="338" width="1" height="1"/><rect x="476" y="360" width="1" height="1"/><rect x="476" y="383" width="1" height="1"/><rect x="476" y="405" width="1" height="1"/><rect x="476" y="427" width="1" height="1"/><rect x="476" y="449" width="1" height="1"/><rect x="476" y="471" width="1" height="1"/><rect x="476" y="493" width="1" height="1"/><rect x="476" y="515" width="1" height="1"/><rect x="476" y="537" width="1" height="1"/><rect x="476" y="559" width="1" height="1"/><rect x="498" y="7" width="1" height="1"/><rect x="498" y="29" width="1" height="1"/><rect x="498" y="51" width="1" height="1"/><rect x="498" y="73" width="1" height="1"/><rect x="498" y="95" width="1" height="1"/><rect x="498" y="117" width="1" height="1"/><rect x="498" y="139" width="1" height="1"/><rect x="498" y="161" width="1" height="1"/><rect x="498" y="184" width="1" height="1"/><rect x="498" y="206" width="1" height="1"/><rect x="498" y="228" width="1" height="1"/><rect x="498" y="250" width="1" height="1"/><rect x="498" y="272" width="1" height="1"/><rect x="498" y="294" width="1" height="1"/><rect x="498" y="316" width="1" height="1"/><rect x="498" y="338" width="1" height="1"/><rect x="498" y="360" width="1" height="1"/><rect x="498" y="383" width="1" height="1"/><rect x="498" y="405" width="1" height="1"/><rect x="498" y="427" width="1" height="1"/><rect x="498" y="449" width="1" height="1"/><rect x="498" y="471" width="1" height="1"/><rect x="498" y="493" width="1" height="1"/><rect x="498" y="515" width="1" height="1"/><rect x="498" y="537" width="1" height="1"/><rect x="498" y="559" width="1" height="1"/><rect x="520" y="7" width="1" height="1"/><rect x="520" y="29" width="1" height="1"/><rect x="520" y="51" width="1" height="1"/><rect x="520" y="73" width="1" height="1"/><rect x="520" y="95" width="1" height="1"/><rect x="520" y="117" width="1" height="1"/><rect x="520" y="139" width="1" height="1"/><rect x="520" y="161" width="1" height="1"/><rect x="520" y="184" width="1" height="1"/><rect x="520" y="206" width="1" height="1"/><rect x="520" y="228" width="1" height="1"/><rect x="520" y="250" width="1" height="1"/><rect x="520" y="272" width="1" height="1"/><rect x="520" y="294" width="1" height="1"/><rect x="520" y="316" width="1" height="1"/><rect x="520" y="338" width="1" height="1"/><rect x="520" y="360" width="1" height="1"/><rect x="520" y="383" width="1" height="1"/><rect x="520" y="405" width="1" height="1"/><rect x="520" y="427" width="1" height="1"/><rect x="520" y="449" width="1" height="1"/><rect x="520" y="471" width="1" height="1"/><rect x="520" y="493" width="1" height="1"/><rect x="520" y="515" width="1" height="1"/><rect x="520" y="537" width="1" height="1"/><rect x="520" y="559" width="1" height="1"/><rect x="543" y="7" width="1" height="1"/><rect x="543" y="29" width="1" height="1"/><rect x="543" y="51" width="1" height="1"/><rect x="543" y="73" width="1" height="1"/><rect x="543" y="95" width="1" height="1"/><rect x="543" y="117" width="1" height="1"/><rect x="543" y="139" width="1" height="1"/><rect x="543" y="161" width="1" height="1"/><rect x="543" y="184" width="1" height="1"/><rect x="543" y="206" width="1" height="1"/><rect x="543" y="228" width="1" height="1"/><rect x="543" y="250" width="1" height="1"/><rect x="543" y="272" width="1" height="1"/><rect x="543" y="294" width="1" height="1"/><rect x="543" y="316" width="1" height="1"/><rect x="543" y="338" width="1" height="1"/><rect x="543" y="360" width="1" height="1"/><rect x="543" y="383" width="1" height="1"/><rect x="543" y="405" width="1" height="1"/><rect x="543" y="427" width="1" height="1"/><rect x="543" y="449" width="1" height="1"/><rect x="543" y="471" width="1" height="1"/><rect x="543" y="493" width="1" height="1"/><rect x="543" y="515" width="1" height="1"/><rect x="543" y="537" width="1" height="1"/><rect x="543" y="559" width="1" height="1"/><rect x="565" y="7" width="1" height="1"/><rect x="565" y="29" width="1" height="1"/><rect x="565" y="51" width="1" height="1"/><rect x="565" y="73" width="1" height="1"/><rect x="565" y="95" width="1" height="1"/><rect x="565" y="117" width="1" height="1"/><rect x="565" y="139" width="1" height="1"/><rect x="565" y="161" width="1" height="1"/><rect x="565" y="184" width="1" height="1"/><rect x="565" y="206" width="1" height="1"/><rect x="565" y="228" width="1" height="1"/><rect x="565" y="250" width="1" height="1"/><rect x="565" y="272" width="1" height="1"/><rect x="565" y="294" width="1" height="1"/><rect x="565" y="316" width="1" height="1"/><rect x="565" y="338" width="1" height="1"/><rect x="565" y="360" width="1" height="1"/><rect x="565" y="383" width="1" height="1"/><rect x="565" y="405" width="1" height="1"/><rect x="565" y="427" width="1" height="1"/><rect x="565" y="449" width="1" height="1"/><rect x="565" y="471" width="1" height="1"/><rect x="565" y="493" width="1" height="1"/><rect x="565" y="515" width="1" height="1"/><rect x="565" y="537" width="1" height="1"/><rect x="565" y="559" width="1" height="1"/><rect x="587" y="7" width="1" height="1"/><rect x="587" y="29" width="1" height="1"/><rect x="587" y="51" width="1" height="1"/><rect x="587" y="73" width="1" height="1"/><rect x="587" y="95" width="1" height="1"/><rect x="587" y="117" width="1" height="1"/><rect x="587" y="139" width="1" height="1"/><rect x="587" y="161" width="1" height="1"/><rect x="587" y="184" width="1" height="1"/><rect x="587" y="206" width="1" height="1"/><rect x="587" y="228" width="1" height="1"/><rect x="587" y="250" width="1" height="1"/><rect x="587" y="272" width="1" height="1"/><rect x="587" y="294" width="1" height="1"/><rect x="587" y="316" width="1" height="1"/><rect x="587" y="338" width="1" height="1"/><rect x="587" y="360" width="1" height="1"/><rect x="587" y="383" width="1" height="1"/><rect x="587" y="405" width="1" height="1"/><rect x="587" y="427" width="1" height="1"/><rect x="587" y="449" width="1" height="1"/><rect x="587" y="471" width="1" height="1"/><rect x="587" y="493" width="1" height="1"/><rect x="587" y="515" width="1" height="1"/><rect x="587" y="537" width="1" height="1"/><rect x="587" y="559" width="1" height="1"/><rect x="609" y="7" width="1" height="1"/><rect x="609" y="29" width="1" height="1"/><rect x="609" y="51" width="1" height="1"/><rect x="609" y="73" width="1" height="1"/><rect x="609" y="95" width="1" height="1"/><rect x="609" y="117" width="1" height="1"/><rect x="609" y="139" width="1" height="1"/><rect x="609" y="161" width="1" height="1"/><rect x="609" y="184" width="1" height="1"/><rect x="609" y="206" width="1" height="1"/><rect x="609" y="228" width="1" height="1"/><rect x="609" y="250" width="1" height="1"/><rect x="609" y="272" width="1" height="1"/><rect x="609" y="294" width="1" height="1"/><rect x="609" y="316" width="1" height="1"/><rect x="609" y="338" width="1" height="1"/><rect x="609" y="360" width="1" height="1"/><rect x="609" y="383" width="1" height="1"/><rect x="609" y="405" width="1" height="1"/><rect x="609" y="427" width="1" height="1"/><rect x="609" y="449" width="1" height="1"/><rect x="609" y="471" width="1" height="1"/><rect x="609" y="493" width="1" height="1"/><rect x="609" y="515" width="1" height="1"/><rect x="609" y="537" width="1" height="1"/><rect x="609" y="559" width="1" height="1"/><rect x="631" y="7" width="1" height="1"/><rect x="631" y="29" width="1" height="1"/><rect x="631" y="51" width="1" height="1"/><rect x="631" y="73" width="1" height="1"/><rect x="631" y="95" width="1" height="1"/><rect x="631" y="117" width="1" height="1"/><rect x="631" y="139" width="1" height="1"/><rect x="631" y="161" width="1" height="1"/><rect x="631" y="184" width="1" height="1"/><rect x="631" y="206" width="1" height="1"/><rect x="631" y="228" width="1" height="1"/><rect x="631" y="250" width="1" height="1"/><rect x="631" y="272" width="1" height="1"/><rect x="631" y="294" width="1" height="1"/><rect x="631" y="316" width="1" height="1"/><rect x="631" y="338" width="1" height="1"/><rect x="631" y="360" width="1" height="1"/><rect x="631" y="383" width="1" height="1"/><rect x="631" y="405" width="1" height="1"/><rect x="631" y="427" width="1" height="1"/><rect x="631" y="449" width="1" height="1"/><rect x="631" y="471" width="1" height="1"/><rect x="631" y="493" width="1" height="1"/><rect x="631" y="515" width="1" height="1"/><rect x="631" y="537" width="1" height="1"/><rect x="631" y="559" width="1" height="1"/><rect x="653" y="7" width="1" height="1"/><rect x="653" y="29" width="1" height="1"/><rect x="653" y="51" width="1" height="1"/><rect x="653" y="73" width="1" height="1"/><rect x="653" y="95" width="1" height="1"/><rect x="653" y="117" width="1" height="1"/><rect x="653" y="139" width="1" height="1"/><rect x="653" y="161" width="1" height="1"/><rect x="653" y="184" width="1" height="1"/><rect x="653" y="206" width="1" height="1"/><rect x="653" y="228" width="1" height="1"/><rect x="653" y="250" width="1" height="1"/><rect x="653" y="272" width="1" height="1"/><rect x="653" y="294" width="1" height="1"/><rect x="653" y="316" width="1" height="1"/><rect x="653" y="338" width="1" height="1"/><rect x="653" y="360" width="1" height="1"/><rect x="653" y="383" width="1" height="1"/><rect x="653" y="405" width="1" height="1"/><rect x="653" y="427" width="1" height="1"/><rect x="653" y="449" width="1" height="1"/><rect x="653" y="471" width="1" height="1"/><rect x="653" y="493" width="1" height="1"/><rect x="653" y="515" width="1" height="1"/><rect x="653" y="537" width="1" height="1"/><rect x="653" y="559" width="1" height="1"/><rect x="675" y="7" width="1" height="1"/><rect x="675" y="29" width="1" height="1"/><rect x="675" y="51" width="1" height="1"/><rect x="675" y="73" width="1" height="1"/><rect x="675" y="95" width="1" height="1"/><rect x="675" y="117" width="1" height="1"/><rect x="675" y="139" width="1" height="1"/><rect x="675" y="161" width="1" height="1"/><rect x="675" y="184" width="1" height="1"/><rect x="675" y="206" width="1" height="1"/><rect x="675" y="228" width="1" height="1"/><rect x="675" y="250" width="1" height="1"/><rect x="675" y="272" width="1" height="1"/><rect x="675" y="294" width="1" height="1"/><rect x="675" y="316" width="1" height="1"/><rect x="675" y="338" width="1" height="1"/><rect x="675" y="360" width="1" height="1"/><rect x="675" y="383" width="1" height="1"/><rect x="675" y="405" width="1" height="1"/><rect x="675" y="427" width="1" height="1"/><rect x="675" y="449" width="1" height="1"/><rect x="675" y="471" width="1" height="1"/><rect x="675" y="493" width="1" height="1"/><rect x="675" y="515" width="1" height="1"/><rect x="675" y="537" width="1" height="1"/><rect x="675" y="559" width="1" height="1"/><rect x="697" y="7" width="1" height="1"/><rect x="697" y="29" width="1" height="1"/><rect x="697" y="51" width="1" height="1"/><rect x="697" y="73" width="1" height="1"/><rect x="697" y="95" width="1" height="1"/><rect x="697" y="117" width="1" height="1"/><rect x="697" y="139" width="1" height="1"/><rect x="697" y="161" width="1" height="1"/><rect x="697" y="184" width="1" height="1"/><rect x="697" y="206" width="1" height="1"/><rect x="697" y="228" width="1" height="1"/><rect x="697" y="250" width="1" height="1"/><rect x="697" y="272" width="1" height="1"/><rect x="697" y="294" width="1" height="1"/><rect x="697" y="316" width="1" height="1"/><rect x="697" y="338" width="1" height="1"/><rect x="697" y="360" width="1" height="1"/><rect x="697" y="383" width="1" height="1"/><rect x="697" y="405" width="1" height="1"/><rect x="697" y="427" width="1" height="1"/><rect x="697" y="449" width="1" height="1"/><rect x="697" y="471" width="1" height="1"/><rect x="697" y="493" width="1" height="1"/><rect x="697" y="515" width="1" height="1"/><rect x="697" y="537" width="1" height="1"/><rect x="697" y="559" width="1" height="1"/></g></svg>
<svg class="s" style="left:455.00px;top:307.00px;" width="138" height="138" viewBox="0 0 138 138"><circle cx="68.2" cy="68.2" r="61.5" fill="#8c7b90"/><circle cx="68.4" cy="68.4" r="53.5" fill="#fd7c7c"/></svg>
<div class="t" style="left:505.80px;top:352.10px;font-size:20.5px;line-height:41.0px;color:#f8d8d8;letter-spacing:-0.5px;font-weight:normal;font-family:'Liberation Sans', sans-serif;">TP2</div>
<div class="r" style="left:836.00px;top:49.00px;width:415.00px;height:594.00px;background:#fff;"></div>
<div class="t" style="left:842.00px;top:51.10px;font-size:10px;line-height:20px;color:#333;letter-spacing:0px;font-weight:normal;font-family:'Liberation Sans', sans-serif;transform:scaleX(0.913);transform-origin:left center;">test point</div>
<div class="t" style="left:1155.70px;top:51.10px;font-size:10px;line-height:20px;color:#444;letter-spacing:0px;font-weight:normal;font-family:'Liberation Sans', sans-serif;transform:scaleX(0.913);transform-origin:left center;">Selected Objects</div>
<div class="t" style="left:1233.00px;top:51.10px;font-size:10px;line-height:20px;color:#444;letter-spacing:0px;font-weight:normal;font-family:'Liberation Sans', sans-serif;transform:scaleX(0.913);transform-origin:left center;">1</div>
<div class="r" style="left:836.00px;top:72.00px;width:415.00px;height:18.50px;background:#ececec;"></div>
<svg class="s" style="left:841.80px;top:79.20px;" width="7" height="4" viewBox="0 0 7 4"><path d="M0 0 L7 0 L3.5 3.6 Z" fill="#555"/></svg>
<div class="t" style="left:852.70px;top:72.00px;font-size:10px;line-height:20px;color:#333;letter-spacing:0px;font-weight:normal;font-family:'Liberation Sans', sans-serif;transform:scaleX(0.913);transform-origin:left center;">Property</div>
<div class="t" style="left:855.80px;top:96.80px;font-size:10px;line-height:20px;color:#333;letter-spacing:0px;font-weight:normal;font-family:'Liberation Sans', sans-serif;transform:scaleX(0.913);transform-origin:left center;">Layer</div>
<div class="r" style="left:1058.00px;top:96.40px;width:186.50px;height:18.20px;background:#fff;border:1px solid #dcdcdc;border-radius:2px;"></div>
<div class="t" style="left:1064.30px;top:97.20px;font-size:10px;line-height:20px;color:#333;letter-spacing:0px;font-weight:normal;font-family:'Liberation Sans', sans-serif;transform:scaleX(0.957);transform-origin:left center;">Top Layer</div>
<svg class="s" style="left:1232.00px;top:104.30px;" width="7" height="5" viewBox="0 0 7 5"><path d="M0.8 0.8 L3.5 3.5 L6.2 0.8" fill="none" stroke="#555" stroke-width="1.1"/></svg>
<svg class="s" style="left:1044.50px;top:89.00px;" width="8" height="5" viewBox="0 0 8 5"><path d="M0 0 L8 0 L4 4.5 Z" fill="#c8c8c8"/></svg>
<div class="t" style="left:855.80px;top:121.10px;font-size:10px;line-height:20px;color:#333;letter-spacing:0px;font-weight:normal;font-family:'Liberation Sans', sans-serif;transform:scaleX(0.913);transform-origin:left center;">Number</div>
<div class="r" style="left:1058.00px;top:120.70px;width:186.50px;height:18.20px;background:#fff;border:1px solid #dcdcdc;border-radius:2px;"></div>
<div class="t" style="left:1064.30px;top:121.50px;font-size:10px;line-height:20px;color:#333;letter-spacing:0px;font-weight:normal;font-family:'Liberation Sans', sans-serif;transform:scaleX(0.957);transform-origin:left center;">TP2</div>
<div class="t" style="left:855.80px;top:145.30px;font-size:10px;line-height:20px;color:#333;letter-spacing:0px;font-weight:normal;font-family:'Liberation Sans', sans-serif;transform:scaleX(0.913);transform-origin:left center;">Net</div>
<div class="r" style="left:1058.00px;top:144.90px;width:171.50px;height:18.20px;background:#fff;border:1px solid #dcdcdc;border-radius:2px;"></div>
<svg class="s" style="left:1217.00px;top:152.80px;" width="7" height="5" viewBox="0 0 7 5"><path d="M0.8 0.8 L3.5 3.5 L6.2 0.8" fill="none" stroke="#555" stroke-width="1.1"/></svg>
<svg class="s" style="left:1233.50px;top:148.50px;" width="9" height="11" viewBox="0 0 9 11"><path d="M1 1 L8 5.5 L4.6 6.2 L2.5 9.5 Z" fill="none" stroke="#333" stroke-width="1"/></svg>
<div class="t" style="left:855.80px;top:169.60px;font-size:10px;line-height:20px;color:#333;letter-spacing:0px;font-weight:normal;font-family:'Liberation Sans', sans-serif;transform:scaleX(0.913);transform-origin:left center;">Net Length</div>
<div class="r" style="left:1058.00px;top:169.20px;width:186.50px;height:18.20px;background:#f0f0f0;border:1px solid #dedede;border-radius:2px;"></div>
<div class="t" style="left:1064.30px;top:170.00px;font-size:10px;line-height:20px;color:#bdbdbd;letter-spacing:0px;font-weight:normal;font-family:'Liberation Sans', sans-serif;transform:scaleX(0.957);transform-origin:left center;">0mil</div>
<div class="t" style="left:855.80px;top:194.00px;font-size:10px;line-height:20px;color:#333;letter-spacing:0px;font-weight:normal;font-family:'Liberation Sans', sans-serif;transform:scaleX(0.913);transform-origin:left center;">ID</div>
<div class="r" style="left:1058.00px;top:193.60px;width:186.50px;height:18.20px;background:#f0f0f0;border:1px solid #dedede;border-radius:2px;"></div>
<div class="t" style="left:1064.30px;top:194.40px;font-size:10px;line-height:20px;color:#bdbdbd;letter-spacing:0px;font-weight:normal;font-family:'Liberation Sans', sans-serif;transform:scaleX(0.957);transform-origin:left center;">e6</div>
<div class="r" style="left:836.00px;top:218.00px;width:415.00px;height:18.50px;background:#ececec;"></div>
<svg class="s" style="left:841.80px;top:225.20px;" width="7" height="4" viewBox="0 0 7 4"><path d="M0 0 L7 0 L3.5 3.6 Z" fill="#555"/></svg>
<div class="t" style="left:852.70px;top:218.00px;font-size:10px;line-height:20px;color:#333;letter-spacing:0px;font-weight:normal;font-family:'Liberation Sans', sans-serif;transform:scaleX(0.913);transform-origin:left center;">Size</div>
<div class="t" style="left:842.20px;top:245.80px;font-size:10px;line-height:20px;color:#333;letter-spacing:0px;font-weight:bold;font-family:'Liberation Sans', sans-serif;transform:scaleX(0.826);transform-origin:left center;">General</div>
<div class="t" style="left:855.80px;top:266.80px;font-size:10px;line-height:20px;color:#333;letter-spacing:0px;font-weight:normal;font-family:'Liberation Sans', sans-serif;transform:scaleX(0.913);transform-origin:left center;">Shape</div>
<div class="r" style="left:1058.00px;top:266.40px;width:186.50px;height:18.20px;background:#fff;border:1px solid #dcdcdc;border-radius:2px;"></div>
<div class="t" style="left:1064.30px;top:267.20px;font-size:10px;line-height:20px;color:#333;letter-spacing:0px;font-weight:normal;font-family:'Liberation Sans', sans-serif;transform:scaleX(0.957);transform-origin:left center;">Round</div>
<svg class="s" style="left:1232.00px;top:274.30px;" width="7" height="5" viewBox="0 0 7 5"><path d="M0.8 0.8 L3.5 3.5 L6.2 0.8" fill="none" stroke="#555" stroke-width="1.1"/></svg>
<div class="t" style="left:855.80px;top:291.00px;font-size:10px;line-height:20px;color:#333;letter-spacing:0px;font-weight:normal;font-family:'Liberation Sans', sans-serif;transform:scaleX(0.913);transform-origin:left center;">Diameter</div>
<div class="r" style="left:1058.00px;top:290.60px;width:186.50px;height:18.20px;background:#fff;border:1px solid #dcdcdc;border-radius:2px;"></div>
<div class="t" style="left:1064.30px;top:291.40px;font-size:10px;line-height:20px;color:#333;letter-spacing:0px;font-weight:normal;font-family:'Liberation Sans', sans-serif;transform:scaleX(0.957);transform-origin:left center;">24mil</div>
<div class="r" style="left:836.00px;top:314.70px;width:415.00px;height:18.50px;background:#ececec;"></div>
<svg class="s" style="left:841.80px;top:321.90px;" width="7" height="4" viewBox="0 0 7 4"><path d="M0 0 L7 0 L3.5 3.6 Z" fill="#555"/></svg>
<div class="t" style="left:852.70px;top:314.70px;font-size:10px;line-height:20px;color:#333;letter-spacing:0px;font-weight:normal;font-family:'Liberation Sans', sans-serif;transform:scaleX(0.913);transform-origin:left center;">Location</div>
<div class="t" style="left:855.80px;top:339.90px;font-size:10px;line-height:20px;color:#333;letter-spacing:0px;font-weight:normal;font-family:'Liberation Sans', sans-serif;transform:scaleX(0.913);transform-origin:left center;">Center X</div>
<div class="r" style="left:1058.00px;top:339.50px;width:186.50px;height:18.20px;background:#fff;border:1px solid #dcdcdc;border-radius:2px;"></div>
<div class="t" style="left:1064.30px;top:340.30px;font-size:10px;line-height:20px;color:#333;letter-spacing:0px;font-weight:normal;font-family:'Liberation Sans', sans-serif;transform:scaleX(0.957);transform-origin:left center;">95mil</div>
<div class="t" style="left:855.80px;top:364.20px;font-size:10px;line-height:20px;color:#333;letter-spacing:0px;font-weight:normal;font-family:'Liberation Sans', sans-serif;transform:scaleX(0.913);transform-origin:left center;">Center Y</div>
<div class="r" style="left:1058.00px;top:363.80px;width:186.50px;height:18.20px;background:#fff;border:1px solid #dcdcdc;border-radius:2px;"></div>
<div class="t" style="left:1064.30px;top:364.60px;font-size:10px;line-height:20px;color:#333;letter-spacing:0px;font-weight:normal;font-family:'Liberation Sans', sans-serif;transform:scaleX(0.957);transform-origin:left center;">-80mil</div>
<div class="t" style="left:855.80px;top:388.40px;font-size:10px;line-height:20px;color:#333;letter-spacing:0px;font-weight:normal;font-family:'Liberation Sans', sans-serif;transform:scaleX(0.913);transform-origin:left center;">Rotation</div>
<div class="r" style="left:1058.00px;top:388.00px;width:186.50px;height:18.20px;background:#fff;border:1px solid #dcdcdc;border-radius:2px;"></div>
<div class="t" style="left:1064.30px;top:388.80px;font-size:10px;line-height:20px;color:#333;letter-spacing:0px;font-weight:normal;font-family:'Liberation Sans', sans-serif;transform:scaleX(0.957);transform-origin:left center;">0</div>
<div class="t" style="left:855.80px;top:412.60px;font-size:10px;line-height:20px;color:#333;letter-spacing:0px;font-weight:normal;font-family:'Liberation Sans', sans-serif;transform:scaleX(0.913);transform-origin:left center;">Locked</div>
<div class="r" style="left:1058.00px;top:412.20px;width:186.50px;height:18.20px;background:#fff;border:1px solid #dcdcdc;border-radius:2px;"></div>
<div class="t" style="left:1064.30px;top:413.00px;font-size:10px;line-height:20px;color:#333;letter-spacing:0px;font-weight:normal;font-family:'Liberation Sans', sans-serif;transform:scaleX(0.957);transform-origin:left center;">No</div>
<svg class="s" style="left:1232.00px;top:420.10px;" width="7" height="5" viewBox="0 0 7 5"><path d="M0.8 0.8 L3.5 3.5 L6.2 0.8" fill="none" stroke="#555" stroke-width="1.1"/></svg>
<div class="r" style="left:836.00px;top:436.00px;width:415.00px;height:18.50px;background:#ececec;"></div>
<svg class="s" style="left:841.80px;top:443.20px;" width="7" height="4" viewBox="0 0 7 4"><path d="M0 0 L7 0 L3.5 3.6 Z" fill="#555"/></svg>
<div class="t" style="left:852.70px;top:436.00px;font-size:10px;line-height:20px;color:#333;letter-spacing:0px;font-weight:normal;font-family:'Liberation Sans', sans-serif;transform:scaleX(0.913);transform-origin:left center;">Solder/Paste Mask Expansion</div>
<svg class="s" style="left:855.30px;top:464.70px;" width="11" height="11" viewBox="0 0 11 11"><circle cx="5.3" cy="5.3" r="4.8" fill="#fff" stroke="#3a8ee6" stroke-width="1"/><circle cx="5.3" cy="5.3" r="2" fill="#3a8ee6"/></svg>
<div class="t" style="left:869.40px;top:460.80px;font-size:10px;line-height:20px;color:#333;letter-spacing:0px;font-weight:normal;font-family:'Liberation Sans', sans-serif;transform:scaleX(0.913);transform-origin:left center;">General</div>
<svg class="s" style="left:913.70px;top:464.70px;" width="11" height="11" viewBox="0 0 11 11"><circle cx="5.3" cy="5.3" r="4.8" fill="#fff" stroke="#b5b5b5" stroke-width="1"/></svg>
<div class="t" style="left:927.70px;top:460.80px;font-size:10px;line-height:20px;color:#333;letter-spacing:0px;font-weight:normal;font-family:'Liberation Sans', sans-serif;transform:scaleX(0.913);transform-origin:left center;">Custom</div>
<div class="t" style="left:855.80px;top:485.20px;font-size:10px;line-height:20px;color:#333;letter-spacing:0px;font-weight:normal;font-family:'Liberation Sans', sans-serif;transform:scaleX(0.913);transform-origin:left center;">Solder Mask Expansion</div>
<div class="r" style="left:1058.00px;top:484.80px;width:186.50px;height:18.20px;background:#f0f0f0;border:1px solid #dedede;border-radius:2px;"></div>
<div class="t" style="left:1064.30px;top:485.60px;font-size:10px;line-height:20px;color:#bdbdbd;letter-spacing:0px;font-weight:normal;font-family:'Liberation Sans', sans-serif;transform:scaleX(0.957);transform-origin:left center;">Follow Rule</div>
<div class="t" style="left:855.80px;top:509.40px;font-size:10px;line-height:20px;color:#333;letter-spacing:0px;font-weight:normal;font-family:'Liberation Sans', sans-serif;transform:scaleX(0.913);transform-origin:left center;">Paste Mask Expansion</div>
<div class="r" style="left:1058.00px;top:509.00px;width:186.50px;height:18.20px;background:#f0f0f0;border:1px solid #dedede;border-radius:2px;"></div>
<div class="t" style="left:1064.30px;top:509.80px;font-size:10px;line-height:20px;color:#bdbdbd;letter-spacing:0px;font-weight:normal;font-family:'Liberation Sans', sans-serif;transform:scaleX(0.957);transform-origin:left center;">Follow Rule</div>
<div class="r" style="left:836.00px;top:533.00px;width:415.00px;height:18.50px;background:#ececec;"></div>
<svg class="s" style="left:841.80px;top:540.20px;" width="7" height="4" viewBox="0 0 7 4"><path d="M0 0 L7 0 L3.5 3.6 Z" fill="#555"/></svg>
<div class="t" style="left:852.70px;top:533.00px;font-size:10px;line-height:20px;color:#333;letter-spacing:0px;font-weight:normal;font-family:'Liberation Sans', sans-serif;transform:scaleX(0.913);transform-origin:left center;">Thermals</div>
<svg class="s" style="left:855.30px;top:561.70px;" width="11" height="11" viewBox="0 0 11 11"><circle cx="5.3" cy="5.3" r="4.8" fill="#fff" stroke="#3a8ee6" stroke-width="1"/><circle cx="5.3" cy="5.3" r="2" fill="#3a8ee6"/></svg>
<div class="t" style="left:869.40px;top:557.80px;font-size:10px;line-height:20px;color:#333;letter-spacing:0px;font-weight:normal;font-family:'Liberation Sans', sans-serif;transform:scaleX(0.913);transform-origin:left center;">General</div>
<svg class="s" style="left:913.70px;top:561.70px;" width="11" height="11" viewBox="0 0 11 11"><circle cx="5.3" cy="5.3" r="4.8" fill="#fff" stroke="#b5b5b5" stroke-width="1"/></svg>
<div class="t" style="left:927.70px;top:557.80px;font-size:10px;line-height:20px;color:#333;letter-spacing:0px;font-weight:normal;font-family:'Liberation Sans', sans-serif;transform:scaleX(0.913);transform-origin:left center;">Custom</div>
<div class="t" style="left:855.80px;top:582.20px;font-size:10px;line-height:20px;color:#333;letter-spacing:0px;font-weight:normal;font-family:'Liberation Sans', sans-serif;transform:scaleX(0.913);transform-origin:left center;">Pad Connection</div>
<div class="r" style="left:1058.00px;top:581.80px;width:186.50px;height:18.20px;background:#f0f0f0;border:1px solid #dedede;border-radius:2px;"></div>
<div class="t" style="left:1064.30px;top:582.60px;font-size:10px;line-height:20px;color:#bdbdbd;letter-spacing:0px;font-weight:normal;font-family:'Liberation Sans', sans-serif;transform:scaleX(0.957);transform-origin:left center;">Follow Rule</div>
<svg class="s" style="left:1232.00px;top:589.70px;" width="7" height="5" viewBox="0 0 7 5"><path d="M0.8 0.8 L3.5 3.5 L6.2 0.8" fill="none" stroke="#555" stroke-width="1.1"/></svg>
<div class="r" style="left:836.00px;top:606.00px;width:415.00px;height:18.50px;background:#ececec;"></div>
<svg class="s" style="left:841.80px;top:613.20px;" width="7" height="4" viewBox="0 0 7 4"><path d="M0 0 L7 0 L3.5 3.6 Z" fill="#555"/></svg>
<div class="t" style="left:852.70px;top:606.00px;font-size:10px;line-height:20px;color:#333;letter-spacing:0px;font-weight:normal;font-family:'Liberation Sans', sans-serif;transform:scaleX(0.913);transform-origin:left center;">Combination</div>
<div class="t" style="left:855.80px;top:630.30px;font-size:10px;line-height:20px;color:#333;letter-spacing:0px;font-weight:normal;font-family:'Liberation Sans', sans-serif;transform:scaleX(0.913);transform-origin:left center;">Group</div>
<div class="r" style="left:1058.00px;top:629.90px;width:186.50px;height:18.20px;background:#fff;border:1px solid #dcdcdc;border-radius:2px;"></div>
<svg class="s" style="left:1232.00px;top:637.80px;" width="7" height="5" viewBox="0 0 7 5"><path d="M0.8 0.8 L3.5 3.5 L6.2 0.8" fill="none" stroke="#555" stroke-width="1.1"/></svg>
<div class="r" style="left:1251.00px;top:49.00px;width:22.00px;height:594.00px;background:#f0f0f0;border-left:1px solid #e2e2e2;"></div>
<svg class="s" style="left:1258.00px;top:55.00px;" width="8" height="10" viewBox="0 0 8 10"><path d="M2 0.5 L6 0.5 L5.5 5 L7 6.5 L1 6.5 L2.5 5 Z" fill="#222"/><rect x="3.6" y="6.5" width="0.9" height="3" fill="#222"/></svg>
<div class="r" style="left:1251.50px;top:74.00px;width:17.50px;height:53.00px;background:#ececec;border:1px solid #dcdcdc;border-left:none;"></div>
<div class="r" style="left:1251.50px;top:127.00px;width:17.50px;height:53.00px;background:#ececec;border:1px solid #dcdcdc;border-left:none;border-top:none;"></div>
<div class="r" style="left:1251.00px;top:180.00px;width:18.00px;height:49.00px;background:#fff;border-right:1px solid #e0e0e0;border-bottom:1px solid #e0e0e0;"></div>
<div class="t" style="left:1230.5px;top:92.5px;width:60px;height:16px;line-height:16px;text-align:center;font-size:10px;letter-spacing:-0.3px;color:#333;transform:rotate(90deg);">Layer</div>
<div class="t" style="left:1230.5px;top:145.5px;width:60px;height:16px;line-height:16px;text-align:center;font-size:10px;letter-spacing:-0.3px;color:#333;transform:rotate(90deg);">Filter</div>
<div class="t" style="left:1230.5px;top:199.7px;width:60px;height:16px;line-height:16px;text-align:center;font-size:10px;letter-spacing:0.05px;color:#1f7ae0;transform:rotate(90deg);">Property</div>
<div class="t" style="left:13.75px;top:2.20px;font-size:10.8px;line-height:21.6px;color:#fff;letter-spacing:-0.05px;font-weight:normal;font-family:'Liberation Sans', sans-serif;">View (V)</div>
<div class="t" style="left:128.25px;top:2.20px;font-size:10.8px;line-height:21.6px;color:#fff;letter-spacing:-0.05px;font-weight:normal;font-family:'Liberation Sans', sans-serif;">Design (D)</div>
<div class="t" style="left:194.50px;top:2.20px;font-size:10.8px;line-height:21.6px;color:#fff;letter-spacing:-0.05px;font-weight:normal;font-family:'Liberation Sans', sans-serif;">Route (U)</div>
<div class="t" style="left:255.25px;top:2.20px;font-size:10.8px;line-height:21.6px;color:#fff;letter-spacing:-0.05px;font-weight:normal;font-family:'Liberation Sans', sans-serif;">Layout (O)</div>
<div class="t" style="left:322.00px;top:2.20px;font-size:10.8px;line-height:21.6px;color:#fff;letter-spacing:-0.05px;font-weight:normal;font-family:'Liberation Sans', sans-serif;">Tools (T)</div>
<div class="t" style="left:378.00px;top:2.20px;font-size:10.8px;line-height:21.6px;color:#fff;letter-spacing:-0.05px;font-weight:normal;font-family:'Liberation Sans', sans-serif;">Export (R)</div>
<div class="t" style="left:441.75px;top:2.20px;font-size:10.8px;line-height:21.6px;color:#fff;letter-spacing:-0.05px;font-weight:normal;font-family:'Liberation Sans', sans-serif;">Order (A)</div>
<div class="t" style="left:501.00px;top:2.20px;font-size:10.8px;line-height:21.6px;color:#fff;letter-spacing:-0.05px;font-weight:normal;font-family:'Liberation Sans', sans-serif;">Settings (I)</div>
<div class="t" style="left:567.50px;top:2.20px;font-size:10.8px;line-height:21.6px;color:#fff;letter-spacing:-0.05px;font-weight:normal;font-family:'Liberation Sans', sans-serif;">Help (H)</div>
<div class="r" style="left:63.00px;top:4.00px;width:56.00px;height:15.50px;background:#4276e3;"></div>
<div class="t" style="left:69.25px;top:2.20px;font-size:10.8px;line-height:21.6px;color:#fff;letter-spacing:-0.12px;font-weight:bold;font-family:'Liberation Sans', sans-serif;">Place (P)</div>
<svg class="s" style="left:716.00px;top:5.00px;" width="15" height="15" viewBox="0 0 15 15"><circle cx="6.3" cy="6.3" r="5" fill="none" stroke="#fff" stroke-width="1.4"/><path d="M9.8 9.8 L13.5 13.5" stroke="#fff" stroke-width="1.5" stroke-linecap="round"/></svg>
<div class="t" style="left:742.00px;top:2.20px;font-size:10.8px;line-height:21.6px;color:#fff;letter-spacing:-0.1px;font-weight:normal;font-family:'Liberation Sans', sans-serif;">V2.2.45 | Full Online</div>
<div class="t" style="left:850.60px;top:3.00px;font-size:10px;line-height:20px;color:#fff;letter-spacing:0px;font-weight:normal;font-family:'Liberation Sans', sans-serif;transform:scaleX(0.902);transform-origin:left center;">Personal</div>
<svg class="s" style="left:894.00px;top:10.00px;" width="8" height="4" viewBox="0 0 8 4"><path d="M0 0 L7.5 0 L3.75 3.6 Z" fill="#fff"/></svg>
<div class="r" style="left:907.00px;top:3.00px;width:42.00px;height:19.00px;background:rgba(255,255,255,0.32);border-radius:10px;"></div>
<svg class="s" style="left:915.50px;top:6.50px;" width="15" height="12" viewBox="0 0 15 12"><path d="M3.5 10.5 Q0.5 10.5 0.8 7.6 Q1.2 5.2 3.6 5.3 Q4.2 1.2 7.8 1.2 Q11.4 1.3 11.8 5 Q14.4 5.3 14.3 8 Q14.2 10.5 11.5 10.5 Z" fill="#fff"/><path d="M6.3 5.2 L6.3 7 M8.4 6.6 L8.4 8.6" stroke="#5a86e0" stroke-width="1.1"/></svg>
<div class="t" style="left:934.50px;top:3.10px;font-size:10.5px;line-height:21.0px;color:#fff;letter-spacing:0px;font-weight:normal;font-family:'Liberation Sans', sans-serif;">0</div>
<div class="t" style="left:955.60px;top:2.20px;font-size:10.8px;line-height:21.6px;color:#fff;letter-spacing:-0.1px;font-weight:normal;font-family:'Liberation Sans', sans-serif;">EN</div>
<svg class="s" style="left:980.00px;top:4.00px;" width="15" height="16" viewBox="0 0 15 16"><path d="M2 12 L13 12 Q11.2 10.5 11.2 8 L11.2 6.5 Q11 2.8 7.5 2.5 Q4 2.8 3.8 6.5 L3.8 8 Q3.8 10.5 2 12 Z" fill="none" stroke="#fff" stroke-width="1.2"/><path d="M6 13.5 Q7.5 15.3 9 13.5" fill="none" stroke="#fff" stroke-width="1.1"/><circle cx="12.2" cy="3.2" r="2.9" fill="#e8101a"/></svg>
<svg class="s" style="left:1005.50px;top:2.30px;" width="21" height="21" viewBox="0 0 21 21"><circle cx="10.5" cy="10.5" r="10" fill="#fff"/><circle cx="10.5" cy="10.5" r="8.8" fill="none" stroke="#f3c4d0" stroke-width="0.9" stroke-dasharray="1 1.5"/><path d="M5.5 14.5 Q3 14.3 3.2 11.8 Q3.5 9.6 5.6 9.7 Q6 6 9.8 5.8 Q13.5 5.9 14.2 9.5 Q17.2 9.7 17.2 12.2 Q17 14.6 14.6 14.6 Z" fill="none" stroke="#5b86d8" stroke-width="1.2"/><circle cx="8" cy="13" r="1.5" fill="none" stroke="#5b86d8" stroke-width="0.9"/><path d="M9.3 12.3 L13 10.5" stroke="#5b86d8" stroke-width="0.9"/></svg>
<div class="t" style="left:1032.00px;top:3.00px;font-size:10px;line-height:20px;color:#fff;letter-spacing:0px;font-weight:normal;font-family:'Liberation Sans', sans-serif;transform:scaleX(0.891);transform-origin:left center;">Haidy-easyeda</div>
<svg class="s" style="left:1100.00px;top:10.00px;" width="8" height="4" viewBox="0 0 8 4"><path d="M0 0 L7 0 L3.5 3.6 Z" fill="#fff"/></svg>
<svg class="s" style="left:1133.50px;top:5.50px;" width="13" height="13" viewBox="0 0 13 13"><polygon points="6.50,0.60 7.65,0.71 8.29,2.18 9.10,2.61 10.67,2.33 11.41,3.22 10.82,4.71 11.09,5.59 12.40,6.50 12.29,7.65 10.82,8.29 10.39,9.10 10.67,10.67 9.78,11.41 8.29,10.82 7.41,11.09 6.50,12.40 5.35,12.29 4.71,10.82 3.90,10.39 2.33,10.67 1.59,9.78 2.18,8.29 1.91,7.41 0.60,6.50 0.71,5.35 2.18,4.71 2.61,3.90 2.33,2.33 3.22,1.59 4.71,2.18 5.59,1.91" fill="none" stroke="#fff" stroke-width="1.3" stroke-linejoin="round"/><circle cx="6.5" cy="6.5" r="2.15" fill="none" stroke="#fff" stroke-width="1.3"/></svg>
<div class="r" style="left:1171.00px;top:11.50px;width:14.00px;height:1.50px;background:#fff;"></div>
<svg class="s" style="left:1209.50px;top:6.00px;" width="14" height="12" viewBox="0 0 14 12"><rect x="0.7" y="3.6" width="8.6" height="7.6" rx="0.8" fill="none" stroke="#fff" stroke-width="1.3"/><path d="M3.6 3.6 L3.6 0.7 L12.8 0.7 L12.8 8.2 L9.3 8.2" fill="none" stroke="#fff" stroke-width="1.3"/></svg>
<svg class="s" style="left:1249.50px;top:7.50px;" width="10" height="10" viewBox="0 0 10 10"><path d="M0.8 0.8 L9 9 M9 0.8 L0.8 9" stroke="#fff" stroke-width="1.4"/></svg>
<div class="r" style="left:10.30px;top:26.50px;width:1.70px;height:20.00px;background:#e4e4e4;"></div>
<svg class="s" style="left:0.00px;top:28.00px;" width="8" height="16" viewBox="0 0 8 16"><path d="M0 3.5 L2.3 3.5 M0 6.5 L1.3 6.5" stroke="#222" stroke-width="1.2"/><circle cx="-1.5" cy="10.5" r="2.2" fill="none" stroke="#222" stroke-width="1.2"/><path d="M0.3 12.3 L2 14" stroke="#222" stroke-width="1.3"/></svg>
<div class="t" style="left:20.00px;top:25.60px;font-size:11px;line-height:22px;color:#333;letter-spacing:0px;font-weight:normal;font-family:'Liberation Sans', sans-serif;">2D</div>
<div class="t" style="left:44.00px;top:25.60px;font-size:11px;line-height:22px;color:#333;letter-spacing:0px;font-weight:normal;font-family:'Liberation Sans', sans-serif;">3D</div>
<svg class="s" style="left:283.80px;top:31.30px;" width="13" height="12" viewBox="0 0 13 12"><circle cx="3" cy="3" r="2.2" fill="none" stroke="#333" stroke-width="1.1"/><path d="M5.2 3 L12 3 M3 5.2 L3 11.5" stroke="#333" stroke-width="1.1"/></svg>
<svg class="s" style="left:305.80px;top:31.60px;" width="13" height="10" viewBox="0 0 13 10"><rect x="0.6" y="0.6" width="11.4" height="8.6" fill="none" stroke="#333" stroke-width="1.2"/><rect x="2.2" y="2.2" width="1.3" height="1.3" fill="#333"/><rect x="9.1" y="2.2" width="1.3" height="1.3" fill="#333"/><rect x="2.2" y="6.1" width="1.3" height="1.3" fill="#333"/><rect x="9.1" y="6.1" width="1.3" height="1.3" fill="#333"/></svg>
<svg class="s" style="left:321.50px;top:36.40px;" width="6" height="4" viewBox="0 0 6 4"><path d="M0 0 L5.5 0 L2.75 3.2 Z" fill="#333"/></svg>
<svg class="s" style="left:334.50px;top:31.00px;" width="13" height="12" viewBox="0 0 13 12"><path d="M0.6 11.4 L0.6 5.6 L3.6 5.6 L3.6 0.6 L12.4 0.6 L12.4 6.4 L9.4 6.4 L9.4 11.4 Z" fill="none" stroke="#333" stroke-width="1.1" stroke-dasharray="1.6 1.2"/></svg>
<svg class="s" style="left:350.00px;top:36.40px;" width="6" height="4" viewBox="0 0 6 4"><path d="M0 0 L5.5 0 L2.75 3.2 Z" fill="#333"/></svg>
<svg class="s" style="left:364.00px;top:31.00px;" width="13" height="12" viewBox="0 0 13 12"><path d="M1.2 11.3 L1.2 6 L5.5 6 L5.5 0.7 L11.8 0.7 L11.8 10.2 Q11.8 11.3 10.7 11.3 Z" fill="none" stroke="#333" stroke-width="1.2" stroke-linejoin="round"/></svg>
<svg class="s" style="left:379.50px;top:36.40px;" width="6" height="4" viewBox="0 0 6 4"><path d="M0 0 L5.5 0 L2.75 3.2 Z" fill="#333"/></svg>
<svg class="s" style="left:392.00px;top:32.00px;" width="13" height="10" viewBox="0 0 13 10"><rect x="0.6" y="1.2" width="11.8" height="7.6" rx="3.8" fill="none" stroke="#333" stroke-width="1.1"/></svg>
<svg class="s" style="left:408.00px;top:36.40px;" width="6" height="4" viewBox="0 0 6 4"><path d="M0 0 L5.5 0 L2.75 3.2 Z" fill="#333"/></svg>
<svg class="s" style="left:421.00px;top:31.00px;" width="13" height="13" viewBox="0 0 13 13"><circle cx="6.3" cy="6.3" r="5.6" fill="none" stroke="#333" stroke-width="1.2"/><path d="M2.4 2.4 L10.2 10.2" stroke="#333" stroke-width="1.2"/></svg>
<svg class="s" style="left:437.00px;top:36.40px;" width="6" height="4" viewBox="0 0 6 4"><path d="M0 0 L5.5 0 L2.75 3.2 Z" fill="#333"/></svg>
<svg class="s" style="left:450.30px;top:30.60px;" width="13" height="12" viewBox="0 0 13 12"><path d="M0.8 11.3 L11.2 0.8" stroke="#333" stroke-width="1.2"/></svg>
<svg class="s" style="left:465.80px;top:36.40px;" width="6" height="4" viewBox="0 0 6 4"><path d="M0 0 L5.5 0 L2.75 3.2 Z" fill="#333"/></svg>
<svg class="s" style="left:479.50px;top:31.00px;" width="12" height="13" viewBox="0 0 12 13"><path d="M0.8 1.6 L0.8 0.8 L11 0.8 L11 1.6 M5.9 0.8 L5.9 12 M4 12 L7.8 12" fill="none" stroke="#333" stroke-width="1.1"/></svg>
<svg class="s" style="left:502.00px;top:30.50px;" width="13" height="13" viewBox="0 0 13 13"><path d="M1.5 11 L11.5 1.5" stroke="#333" stroke-width="1.1"/><path d="M-0.2 9.3 L3.2 12.7 M9.8 -0.2 L13.2 3.2" stroke="#333" stroke-width="1.3"/></svg>
<svg class="s" style="left:518.60px;top:36.40px;" width="6" height="4" viewBox="0 0 6 4"><path d="M0 0 L5.5 0 L2.75 3.2 Z" fill="#333"/></svg>
<div class="r" style="left:527.80px;top:26.00px;width:1.00px;height:21.00px;background:#e0e0e0;"></div>
<svg class="s" style="left:537.50px;top:31.00px;" width="14" height="11" viewBox="0 0 14 11"><path d="M0.8 6 L0.8 9.8 L13 9.8 L13 0.8 L9.5 0.8" fill="none" stroke="#333" stroke-width="1.1"/><path d="M1 1.2 L4.5 1.2 Q6.5 1.5 7.3 4.5" fill="none" stroke="#333" stroke-width="1.1"/><path d="M5.3 3.8 L7.4 5.8 L9.2 3.5" fill="none" stroke="#333" stroke-width="1.1"/></svg>
<div class="t" style="left:561.20px;top:28.70px;font-size:8.6px;line-height:17.2px;color:#333;letter-spacing:-0.7px;font-weight:normal;font-family:'Liberation Mono', monospace;">DRC</div>
<svg class="s" style="left:585.50px;top:31.00px;" width="13" height="12" viewBox="0 0 13 12"><circle cx="2.2" cy="2.2" r="1.6" fill="none" stroke="#333" stroke-width="1"/><circle cx="10.6" cy="9.8" r="1.6" fill="none" stroke="#333" stroke-width="1"/><path d="M3.8 2.4 L5.2 3 L5.2 8.5 L9 9.6" fill="none" stroke="#333" stroke-width="1.1"/></svg>
<svg class="s" style="left:608.50px;top:30.50px;" width="13" height="12" viewBox="0 0 13 12"><path d="M0.3 2 Q1.6 1.8 3 3.2 L8.8 9 Q9.8 10 9.8 11.3" fill="none" stroke="#333" stroke-width="1.2"/><path d="M7.2 4.8 L10.8 1.6" stroke="#333" stroke-width="1.1"/><circle cx="11.3" cy="1.3" r="1.3" fill="#333"/></svg>
<div class="r" style="left:628.30px;top:28.10px;width:64.70px;height:16.50px;background:#fff;border:1px solid #e2e2e2;border-radius:2px;"></div>
<div class="t" style="left:632.00px;top:26.10px;font-size:10.5px;line-height:21.0px;color:#333;letter-spacing:0px;font-weight:normal;font-family:'Liberation Sans', sans-serif;transform:scaleX(0.938);transform-origin:left center;">Line 45°</div>
<svg class="s" style="left:678.60px;top:34.30px;" width="7" height="5" viewBox="0 0 7 5"><path d="M0.8 0.8 L3.5 3.5 L6.2 0.8" fill="none" stroke="#555" stroke-width="1.1"/></svg>
<div class="r" style="left:696.00px;top:26.00px;width:1.00px;height:21.00px;background:#dcdcdc;"></div>
<svg class="s" style="left:706.00px;top:31.00px;" width="12" height="12" viewBox="0 0 12 12"><path d="M0.8 0 L0.8 12" stroke="#d0d0d0" stroke-width="1"/><rect x="2.5" y="1.5" width="5" height="3.5" fill="none" stroke="#d0d0d0" stroke-width="1"/><rect x="2.5" y="7" width="9" height="3.5" fill="none" stroke="#d0d0d0" stroke-width="1"/></svg>
<svg class="s" style="left:721.70px;top:36.40px;" width="6" height="4" viewBox="0 0 6 4"><path d="M0 0 L5.5 0 L2.75 3.2 Z" fill="#333"/></svg>
<svg class="s" style="left:735.00px;top:31.00px;" width="12" height="12" viewBox="0 0 12 12"><rect x="0.6" y="0.6" width="3.5" height="4" fill="none" stroke="#d0d0d0" stroke-width="1"/><rect x="7.5" y="0.6" width="3.5" height="4" fill="none" stroke="#d0d0d0" stroke-width="1"/><rect x="0.6" y="7.2" width="3.5" height="4" fill="none" stroke="#d0d0d0" stroke-width="1"/><rect x="7.5" y="7.2" width="3.5" height="4" fill="none" stroke="#d0d0d0" stroke-width="1"/></svg>
<svg class="s" style="left:750.00px;top:36.40px;" width="6" height="4" viewBox="0 0 6 4"><path d="M0 0 L5.5 0 L2.75 3.2 Z" fill="#333"/></svg>
<svg class="s" style="left:763.50px;top:29.60px;" width="13" height="13" viewBox="0 0 13 13"><path d="M5.6 1 L5.6 12 L0.8 12 Z" fill="none" stroke="#333" stroke-width="1.1"/><path d="M7.4 12 L12 12 L8.5 7 M7.4 1 L7.4 4" fill="none" stroke="#333" stroke-width="1.1"/><path d="M8 2.5 Q11 3 11.5 6.5" fill="none" stroke="#333" stroke-width="1"/></svg>
<svg class="s" style="left:787.00px;top:29.60px;" width="13" height="13" viewBox="0 0 13 13"><path d="M7.4 1 L7.4 12 L12.2 12 Z" fill="none" stroke="#333" stroke-width="1.1"/><path d="M5.6 12 L1 12 L4.5 7 M5.6 1 L5.6 4" fill="none" stroke="#333" stroke-width="1.1"/><path d="M5 2.5 Q2 3 1.5 6.5" fill="none" stroke="#333" stroke-width="1"/></svg>
<div class="r" style="left:808.00px;top:26.00px;width:1.00px;height:21.00px;background:#dcdcdc;"></div>
<svg class="s" style="left:817.50px;top:30.50px;" width="13" height="13" viewBox="0 0 13 13"><path d="M1.5 2 L1.5 12 L12 12 L12 2 L7 2 L6 0.8 L2.5 0.8 Z" fill="none" stroke="#333" stroke-width="1.1" stroke-linejoin="round"/><path d="M9 5.5 Q6.5 4 5 5.6 Q3.8 7.5 5.2 9.3 Q7 10.5 8.8 9.2 L8.8 7.6 L7 7.6" fill="none" stroke="#333" stroke-width="1"/></svg>
<svg class="s" style="left:841.50px;top:30.50px;" width="13" height="13" viewBox="0 0 13 13"><path d="M1.5 2 L1.5 12 L12 12 L12 2 L7 2 L6 0.8 L2.5 0.8 Z" fill="none" stroke="#333" stroke-width="1.1" stroke-linejoin="round"/><path d="M6.8 4.2 L9.8 7 L6.8 9.8 L3.8 7 Z" fill="none" stroke="#333" stroke-width="1"/><circle cx="6.8" cy="7" r="0.9" fill="#333"/></svg>
<svg class="s" style="left:865.00px;top:30.50px;" width="13" height="13" viewBox="0 0 13 13"><path d="M0.5 1.5 L2.5 1.5 L3.5 9 L11 9" fill="none" stroke="#333" stroke-width="1.1"/><rect x="4.5" y="1" width="7" height="6" fill="none" stroke="#333" stroke-width="1"/><path d="M6 3 L10 3 M6 5 L10 5" stroke="#333" stroke-width="0.8"/><circle cx="4.5" cy="11.2" r="1" fill="#333"/><circle cx="10" cy="11.2" r="1" fill="#333"/></svg>
<svg class="s" style="left:888.00px;top:30.50px;" width="13" height="13" viewBox="0 0 13 13"><polygon points="6.50,0.60 7.65,0.71 8.29,2.18 9.10,2.61 10.67,2.33 11.41,3.22 10.82,4.71 11.09,5.59 12.40,6.50 12.29,7.65 10.82,8.29 10.39,9.10 10.67,10.67 9.78,11.41 8.29,10.82 7.41,11.09 6.50,12.40 5.35,12.29 4.71,10.82 3.90,10.39 2.33,10.67 1.59,9.78 2.18,8.29 1.91,7.41 0.60,6.50 0.71,5.35 2.18,4.71 2.61,3.90 2.33,2.33 3.22,1.59 4.71,2.18 5.59,1.91" fill="none" stroke="#333" stroke-width="1.1" stroke-linejoin="round"/><circle cx="6.5" cy="6.5" r="2.15" fill="none" stroke="#333" stroke-width="1.1"/></svg>
<div class="r" style="left:63.3px;top:20.5px;width:208.0px;height:578.3px;background:#fff;box-shadow:0 1px 4px rgba(0,0,0,0.22);"></div>
<svg class="s" style="left:70.00px;top:26.62px;" width="12" height="12" viewBox="0 0 12 12"><rect x="2.5" y="0.8" width="7" height="10.4" rx="1" fill="none" stroke="#333" stroke-width="1.1"/><path d="M0 2.5 L2.5 2.5 M0 4.8 L2.5 4.8 M0 7.1 L2.5 7.1 M0 9.4 L2.5 9.4 M9.5 2.5 L12 2.5 M9.5 4.8 L12 4.8 M9.5 7.1 L12 7.1 M9.5 9.4 L12 9.4" stroke="#333" stroke-width="0.9"/><rect x="3.8" y="2" width="0.9" height="1.3" fill="#333"/></svg>
<div class="t" style="left:88.20px;top:22.62px;font-size:10px;line-height:20px;color:#333;letter-spacing:0px;font-weight:normal;font-family:'Liberation Sans', sans-serif;transform:scaleX(0.913);transform-origin:left center;">Device/Reuse Block(P)...</div>
<div class="t" style="right:1017.80px;top:22.62px;font-size:10px;line-height:20px;color:#333;letter-spacing:0px;font-weight:normal;font-family:'Liberation Sans', sans-serif;transform:scaleX(0.913);transform-origin:right center;">Shift+F</div>
<svg class="s" style="left:70.00px;top:47.88px;" width="12" height="12" viewBox="0 0 12 12"><circle cx="3" cy="3.5" r="2.2" fill="none" stroke="#333" stroke-width="1.1"/><path d="M5.2 3.3 L11.5 3.3 M3 5.7 L3 11.5" stroke="#333" stroke-width="1.1"/></svg>
<div class="t" style="left:88.20px;top:43.88px;font-size:10px;line-height:20px;color:#333;letter-spacing:0px;font-weight:normal;font-family:'Liberation Sans', sans-serif;transform:scaleX(0.913);transform-origin:left center;">Via(V)</div>
<div class="t" style="right:1017.80px;top:43.88px;font-size:10px;line-height:20px;color:#333;letter-spacing:0px;font-weight:normal;font-family:'Liberation Sans', sans-serif;transform:scaleX(0.913);transform-origin:right center;">Alt+V</div>
<svg class="s" style="left:70.00px;top:69.12px;" width="12" height="12" viewBox="0 0 12 12"><path d="M3.3 0.09999999999999964 Q4.0 2.5999999999999996 6.5 3.3 Q4.0 4.0 3.3 6.5 Q2.5999999999999996 4.0 0.09999999999999964 3.3 Q2.5999999999999996 2.5999999999999996 3.3 0.09999999999999964 Z" fill="none" stroke="#333" stroke-width="1"/><path d="M8.7 0.09999999999999964 Q9.399999999999999 2.5999999999999996 11.899999999999999 3.3 Q9.399999999999999 4.0 8.7 6.5 Q7.999999999999999 4.0 5.499999999999999 3.3 Q7.999999999999999 2.5999999999999996 8.7 0.09999999999999964 Z" fill="none" stroke="#333" stroke-width="1"/><path d="M3.3 5.499999999999999 Q4.0 7.999999999999999 6.5 8.7 Q4.0 9.399999999999999 3.3 11.899999999999999 Q2.5999999999999996 9.399999999999999 0.09999999999999964 8.7 Q2.5999999999999996 7.999999999999999 3.3 5.499999999999999 Z" fill="none" stroke="#333" stroke-width="1"/><path d="M8.7 5.499999999999999 Q9.399999999999999 7.999999999999999 11.899999999999999 8.7 Q9.399999999999999 9.399999999999999 8.7 11.899999999999999 Q7.999999999999999 9.399999999999999 5.499999999999999 8.7 Q7.999999999999999 7.999999999999999 8.7 5.499999999999999 Z" fill="none" stroke="#333" stroke-width="1"/></svg>
<div class="t" style="left:88.20px;top:65.12px;font-size:10px;line-height:20px;color:#333;letter-spacing:0px;font-weight:normal;font-family:'Liberation Sans', sans-serif;transform:scaleX(0.913);transform-origin:left center;">Suture Vias...</div>
<svg class="s" style="left:256.50px;top:72.12px;" width="4" height="6" viewBox="0 0 4 6"><path d="M0 0 L3.5 3 L0 6 Z" fill="#333"/></svg>
<svg class="s" style="left:70.00px;top:90.38px;" width="12" height="12" viewBox="0 0 12 12"><circle cx="6" cy="6" r="5.3" fill="none" stroke="#333" stroke-width="1.1"/><circle cx="6" cy="6" r="2.8" fill="none" stroke="#333" stroke-width="1.1"/></svg>
<div class="t" style="left:88.20px;top:86.38px;font-size:10px;line-height:20px;color:#333;letter-spacing:0px;font-weight:normal;font-family:'Liberation Sans', sans-serif;transform:scaleX(0.913);transform-origin:left center;">Pad(P)</div>
<div class="t" style="right:1017.80px;top:86.38px;font-size:10px;line-height:20px;color:#333;letter-spacing:0px;font-weight:normal;font-family:'Liberation Sans', sans-serif;transform:scaleX(0.913);transform-origin:right center;">Alt+P</div>
<svg class="s" style="left:70.00px;top:111.62px;" width="12" height="12" viewBox="0 0 12 12"><path d="M4 1.2 L10.8 1.2 L10.8 10.8 L4 10.8 Q0.8 10.5 0.8 6 Q0.8 1.5 4 1.2 Z" fill="none" stroke="#333" stroke-width="1.1"/></svg>
<div class="t" style="left:88.20px;top:107.62px;font-size:10px;line-height:20px;color:#333;letter-spacing:0px;font-weight:normal;font-family:'Liberation Sans', sans-serif;transform:scaleX(0.913);transform-origin:left center;">Shaped Pad</div>
<div class="r" style="left:64.30px;top:128.25px;width:206.00px;height:1.00px;background:#e6e6e6;"></div>
<svg class="s" style="left:70.00px;top:133.62px;" width="12" height="12" viewBox="0 0 12 12"><rect x="0.6" y="1.2" width="11" height="9.4" fill="none" stroke="#333" stroke-width="1.1"/><rect x="2.1" y="2.7" width="1.1" height="1.1" fill="#333"/><rect x="9" y="2.7" width="1.1" height="1.1" fill="#333"/><rect x="2.1" y="8" width="1.1" height="1.1" fill="#333"/><rect x="9" y="8" width="1.1" height="1.1" fill="#333"/></svg>
<div class="t" style="left:88.20px;top:129.62px;font-size:10px;line-height:20px;color:#333;letter-spacing:0px;font-weight:normal;font-family:'Liberation Sans', sans-serif;transform:scaleX(0.913);transform-origin:left center;">Board Outline</div>
<svg class="s" style="left:256.50px;top:136.62px;" width="4" height="6" viewBox="0 0 4 6"><path d="M0 0 L3.5 3 L0 6 Z" fill="#333"/></svg>
<svg class="s" style="left:70.00px;top:154.88px;" width="12" height="12" viewBox="0 0 12 12"><path d="M0.6 11.4 L0.6 5.6 L3.6 5.6 L3.6 0.6 L11.4 0.6 L11.4 6.4 L8.6 6.4 L8.6 11.4 Z" fill="none" stroke="#333" stroke-width="1.1" stroke-dasharray="1.5 1.2"/></svg>
<div class="t" style="left:88.20px;top:150.88px;font-size:10px;line-height:20px;color:#333;letter-spacing:0px;font-weight:normal;font-family:'Liberation Sans', sans-serif;transform:scaleX(0.913);transform-origin:left center;">Copper Region</div>
<svg class="s" style="left:256.50px;top:157.88px;" width="4" height="6" viewBox="0 0 4 6"><path d="M0 0 L3.5 3 L0 6 Z" fill="#333"/></svg>
<svg class="s" style="left:70.00px;top:176.12px;" width="12" height="12" viewBox="0 0 12 12"><path d="M1 11.3 L1 6 L4.8 6 L4.8 0.7 L11 0.7 L11 10.2 Q11 11.3 10 11.3 Z" fill="none" stroke="#333" stroke-width="1.1" stroke-linejoin="round"/></svg>
<div class="t" style="left:88.20px;top:172.12px;font-size:10px;line-height:20px;color:#333;letter-spacing:0px;font-weight:normal;font-family:'Liberation Sans', sans-serif;transform:scaleX(0.913);transform-origin:left center;">Fill Region</div>
<svg class="s" style="left:256.50px;top:179.12px;" width="4" height="6" viewBox="0 0 4 6"><path d="M0 0 L3.5 3 L0 6 Z" fill="#333"/></svg>
<svg class="s" style="left:70.00px;top:197.38px;" width="12" height="12" viewBox="0 0 12 12"><rect x="0.6" y="2.2" width="11" height="7.6" rx="3.8" fill="none" stroke="#333" stroke-width="1.1"/></svg>
<div class="t" style="left:88.20px;top:193.38px;font-size:10px;line-height:20px;color:#333;letter-spacing:0px;font-weight:normal;font-family:'Liberation Sans', sans-serif;transform:scaleX(0.913);transform-origin:left center;">Slot Region</div>
<svg class="s" style="left:256.50px;top:200.38px;" width="4" height="6" viewBox="0 0 4 6"><path d="M0 0 L3.5 3 L0 6 Z" fill="#333"/></svg>
<svg class="s" style="left:70.00px;top:218.62px;" width="12" height="12" viewBox="0 0 12 12"><circle cx="6" cy="6" r="5.4" fill="none" stroke="#333" stroke-width="1.1"/><path d="M2.2 2.2 L9.8 9.8" stroke="#333" stroke-width="1.1"/></svg>
<div class="t" style="left:88.20px;top:214.62px;font-size:10px;line-height:20px;color:#333;letter-spacing:0px;font-weight:normal;font-family:'Liberation Sans', sans-serif;transform:scaleX(0.913);transform-origin:left center;">Prohibited Region</div>
<svg class="s" style="left:256.50px;top:221.62px;" width="4" height="6" viewBox="0 0 4 6"><path d="M0 0 L3.5 3 L0 6 Z" fill="#333"/></svg>
<svg class="s" style="left:70.00px;top:239.88px;" width="12" height="12" viewBox="0 0 12 12"><path d="M0.6 11.4 L0.6 0.6 L6 0.6 L6 4.5 L11.4 4.5 L11.4 11.4 Z" fill="none" stroke="#333" stroke-width="1.1"/><path d="M2.5 6 L4.5 3.5 M2.5 9 L7 4.5 M5 10 L9.5 6.5" stroke="#333" stroke-width="0.9"/></svg>
<div class="t" style="left:88.20px;top:235.88px;font-size:10px;line-height:20px;color:#333;letter-spacing:0px;font-weight:normal;font-family:'Liberation Sans', sans-serif;transform:scaleX(0.913);transform-origin:left center;">Constraint Region</div>
<svg class="s" style="left:256.50px;top:242.88px;" width="4" height="6" viewBox="0 0 4 6"><path d="M0 0 L3.5 3 L0 6 Z" fill="#333"/></svg>
<svg class="s" style="left:70.00px;top:261.12px;" width="12" height="12" viewBox="0 0 12 12"><path d="M0.8 11.3 L11.3 0.8" stroke="#333" stroke-width="1.2"/></svg>
<div class="t" style="left:88.20px;top:257.12px;font-size:10px;line-height:20px;color:#333;letter-spacing:0px;font-weight:normal;font-family:'Liberation Sans', sans-serif;transform:scaleX(0.913);transform-origin:left center;">Line(L)</div>
<svg class="s" style="left:256.50px;top:264.12px;" width="4" height="6" viewBox="0 0 4 6"><path d="M0 0 L3.5 3 L0 6 Z" fill="#333"/></svg>
<div class="r" style="left:64.30px;top:277.75px;width:206.00px;height:1.00px;background:#e6e6e6;"></div>
<svg class="s" style="left:70.00px;top:283.12px;" width="12" height="12" viewBox="0 0 12 12"><circle cx="2" cy="10" r="1.4" fill="none" stroke="#333" stroke-width="1"/><path d="M2.8 8.8 L6 3 Q7.5 0.5 9 2 L9.5 4 L11 3.8" fill="none" stroke="#333" stroke-width="1.1"/></svg>
<div class="t" style="left:88.20px;top:279.12px;font-size:10px;line-height:20px;color:#333;letter-spacing:0px;font-weight:normal;font-family:'Liberation Sans', sans-serif;transform:scaleX(0.913);transform-origin:left center;">Test Point</div>
<svg class="s" style="left:70.00px;top:304.38px;" width="12" height="12" viewBox="0 0 12 12"><path d="M0.6 9.5 L5 3.5 L11.4 7.5 L10 10.8 L1.5 10.8 Z" fill="none" stroke="#333" stroke-width="1.1"/><path d="M3 8 L6 5.5 M5 9.5 L8 7 M6 4 L8 1.5 L10 3" fill="none" stroke="#333" stroke-width="0.9"/></svg>
<div class="t" style="left:88.20px;top:300.38px;font-size:10px;line-height:20px;color:#333;letter-spacing:0px;font-weight:normal;font-family:'Liberation Sans', sans-serif;transform:scaleX(0.913);transform-origin:left center;">FPC Stiffener</div>
<svg class="s" style="left:256.50px;top:307.38px;" width="4" height="6" viewBox="0 0 4 6"><path d="M0 0 L3.5 3 L0 6 Z" fill="#333"/></svg>
<div class="r" style="left:64.30px;top:321.00px;width:206.00px;height:1.00px;background:#e6e6e6;"></div>
<svg class="s" style="left:70.00px;top:326.38px;" width="12" height="12" viewBox="0 0 12 12"><path d="M0.8 1.8 L0.8 0.8 L11.2 0.8 L11.2 1.8 M6 0.8 L6 11.4 M4 11.4 L8 11.4" fill="none" stroke="#333" stroke-width="1.1"/></svg>
<div class="t" style="left:88.20px;top:322.38px;font-size:10px;line-height:20px;color:#333;letter-spacing:0px;font-weight:normal;font-family:'Liberation Sans', sans-serif;transform:scaleX(0.913);transform-origin:left center;">Text</div>
<svg class="s" style="left:70.00px;top:347.62px;" width="12" height="12" viewBox="0 0 12 12"><rect x="0.6" y="1.5" width="11" height="9" fill="none" stroke="#333" stroke-width="1.1"/><path d="M1 9 L4.5 5.5 L7 8 L8.8 6.5 L11.4 9" fill="none" stroke="#333" stroke-width="1"/><circle cx="3.5" cy="4" r="1.1" fill="none" stroke="#333" stroke-width="0.9"/></svg>
<div class="t" style="left:88.20px;top:343.62px;font-size:10px;line-height:20px;color:#333;letter-spacing:0px;font-weight:normal;font-family:'Liberation Sans', sans-serif;transform:scaleX(0.913);transform-origin:left center;">Image(G)...</div>
<svg class="s" style="left:70.00px;top:368.88px;" width="12" height="12" viewBox="0 0 12 12"><path d="M1.5 10.5 L10.5 1.5" stroke="#333" stroke-width="1" stroke-dasharray="1.8 1.2"/><path d="M0 10 L2 12 L3.2 10.8 L1.2 8.8 Z M12 2 L10 0 L8.8 1.2 L10.8 3.2 Z" fill="#333"/></svg>
<div class="t" style="left:88.20px;top:364.88px;font-size:10px;line-height:20px;color:#333;letter-spacing:0px;font-weight:normal;font-family:'Liberation Sans', sans-serif;transform:scaleX(0.913);transform-origin:left center;">Dimension(D)</div>
<svg class="s" style="left:256.50px;top:371.88px;" width="4" height="6" viewBox="0 0 4 6"><path d="M0 0 L3.5 3 L0 6 Z" fill="#333"/></svg>
<svg class="s" style="left:70.00px;top:390.12px;" width="12" height="12" viewBox="0 0 12 12"><rect x="0.6" y="1.5" width="11" height="9.5" fill="none" stroke="#333" stroke-width="1.1"/><path d="M0.6 3.6 L11.6 3.6 M0.6 6.2 L11.6 6.2 M0.6 8.6 L11.6 8.6 M4.3 3.6 L4.3 11 M8 3.6 L8 11" stroke="#333" stroke-width="0.9"/></svg>
<div class="t" style="left:88.20px;top:386.12px;font-size:10px;line-height:20px;color:#333;letter-spacing:0px;font-weight:normal;font-family:'Liberation Sans', sans-serif;transform:scaleX(0.913);transform-origin:left center;">Stack Table</div>
<svg class="s" style="left:70.00px;top:411.38px;" width="12" height="12" viewBox="0 0 12 12"><rect x="0.6" y="1.5" width="11" height="9.5" fill="none" stroke="#333" stroke-width="1.1"/><path d="M0.6 3.6 L11.6 3.6 M0.6 6.2 L11.6 6.2 M0.6 8.6 L11.6 8.6 M4.3 3.6 L4.3 11 M8 3.6 L8 11" stroke="#333" stroke-width="0.9"/></svg>
<div class="t" style="left:88.20px;top:407.38px;font-size:10px;line-height:20px;color:#333;letter-spacing:0px;font-weight:normal;font-family:'Liberation Sans', sans-serif;transform:scaleX(0.913);transform-origin:left center;">Drill Table</div>
<svg class="s" style="left:70.00px;top:432.62px;" width="12" height="12" viewBox="0 0 12 12"><path d="M1.5 0.5 L1.5 11 L11.5 11" fill="none" stroke="#333" stroke-width="1"/><circle cx="1.5" cy="0.9" r="0.9" fill="#333"/><circle cx="11.3" cy="11" r="0.9" fill="#333"/></svg>
<div class="t" style="left:88.20px;top:428.62px;font-size:10px;line-height:20px;color:#333;letter-spacing:0px;font-weight:normal;font-family:'Liberation Sans', sans-serif;transform:scaleX(0.913);transform-origin:left center;">Canvas Origin</div>
<svg class="s" style="left:256.50px;top:435.62px;" width="4" height="6" viewBox="0 0 4 6"><path d="M0 0 L3.5 3 L0 6 Z" fill="#333"/></svg>
<div class="r" style="left:64.30px;top:449.25px;width:206.00px;height:1.00px;background:#e6e6e6;"></div>
<svg class="s" style="left:70.00px;top:454.62px;" width="12" height="12" viewBox="0 0 12 12"><path d="M0.6 3.5 L3 1 L11.4 1 L11.4 8.8 L9 11.3 L0.6 11.3 Z M0.6 3.5 L9 3.5 L9 11.3 M9 3.5 L11.4 1" fill="none" stroke="#333" stroke-width="1"/></svg>
<div class="t" style="left:88.20px;top:450.62px;font-size:10px;line-height:20px;color:#333;letter-spacing:0px;font-weight:normal;font-family:'Liberation Sans', sans-serif;transform:scaleX(0.913);transform-origin:left center;">3D Shell - Outline</div>
<svg class="s" style="left:256.50px;top:457.62px;" width="4" height="6" viewBox="0 0 4 6"><path d="M0 0 L3.5 3 L0 6 Z" fill="#333"/></svg>
<svg class="s" style="left:70.00px;top:475.88px;" width="12" height="12" viewBox="0 0 12 12"><path d="M1 6.5 L6 1.5 Q8 0.2 10 1.6 Q11.6 3.5 10.5 5.5 L5.5 10.5 Q3.5 11.8 1.8 10.2 Q0.2 8.5 1 6.5 Z" fill="none" stroke="#333" stroke-width="1"/><path d="M6 1.5 Q7.5 3.5 10.5 5.5" fill="none" stroke="#333" stroke-width="0.9"/></svg>
<div class="t" style="left:88.20px;top:471.88px;font-size:10px;line-height:20px;color:#333;letter-spacing:0px;font-weight:normal;font-family:'Liberation Sans', sans-serif;transform:scaleX(0.913);transform-origin:left center;">3D Shell - Screw Pillar</div>
<svg class="s" style="left:70.00px;top:497.12px;" width="12" height="12" viewBox="0 0 12 12"><path d="M1 2.5 Q1 1 2.5 1 L10 1 Q11.4 1 11.4 2.5 L11.4 9.5 Q11.4 11 10 11 L2.5 11 Q1 11 1 9.5 Z" fill="none" stroke="#333" stroke-width="1"/><path d="M1 4 L11.4 4 M0 7 L12 7" stroke="#333" stroke-width="0.9" stroke-dasharray="1.5 1"/></svg>
<div class="t" style="left:88.20px;top:493.12px;font-size:10px;line-height:20px;color:#333;letter-spacing:0px;font-weight:normal;font-family:'Liberation Sans', sans-serif;transform:scaleX(0.913);transform-origin:left center;">3D Shell - Side Datum Line</div>
<svg class="s" style="left:70.00px;top:518.38px;" width="12" height="12" viewBox="0 0 12 12"><path d="M2.5 1 L11.4 1 L11.4 9 L9.5 11.3 L0.6 11.3 L0.6 3 Z" fill="none" stroke="#333" stroke-width="1"/><rect x="3" y="4" width="5.5" height="5" rx="1" fill="none" stroke="#333" stroke-width="1"/><rect x="4.6" y="5.5" width="2.4" height="2" fill="none" stroke="#333" stroke-width="0.8"/></svg>
<div class="t" style="left:88.20px;top:514.38px;font-size:10px;line-height:20px;color:#333;letter-spacing:0px;font-weight:normal;font-family:'Liberation Sans', sans-serif;transform:scaleX(0.913);transform-origin:left center;">3D Shell - Side Slot Region</div>
<svg class="s" style="left:256.50px;top:521.38px;" width="4" height="6" viewBox="0 0 4 6"><path d="M0 0 L3.5 3 L0 6 Z" fill="#333"/></svg>
<svg class="s" style="left:70.00px;top:539.62px;" width="12" height="12" viewBox="0 0 12 12"><path d="M6 1 L11.5 4.5 L11.5 7.5 L6 11 L0.5 7.5 L0.5 4.5 Z M0.5 4.5 L6 8 L11.5 4.5" fill="none" stroke="#333" stroke-width="1"/><path d="M3.5 4.5 L6 3 L8.5 4.5 L6 6 Z" fill="none" stroke="#333" stroke-width="0.9"/></svg>
<div class="t" style="left:88.20px;top:535.62px;font-size:10px;line-height:20px;color:#333;letter-spacing:0px;font-weight:normal;font-family:'Liberation Sans', sans-serif;transform:scaleX(0.913);transform-origin:left center;">3D Shell - Top/Bottom Slot Region</div>
<svg class="s" style="left:256.50px;top:542.62px;" width="4" height="6" viewBox="0 0 4 6"><path d="M0 0 L3.5 3 L0 6 Z" fill="#333"/></svg>
<svg class="s" style="left:70.00px;top:560.88px;" width="12" height="12" viewBox="0 0 12 12"><path d="M2.5 1 L11.4 1 L11.4 9 L9.5 11.3 L0.6 11.3 L0.6 3 Z" fill="none" stroke="#333" stroke-width="1"/><circle cx="6" cy="7" r="3" fill="none" stroke="#333" stroke-width="1"/><path d="M4.5 6 L7.5 6 M6 4.5 L6 9" stroke="#333" stroke-width="0.8"/></svg>
<div class="t" style="left:88.20px;top:556.88px;font-size:10px;line-height:20px;color:#333;letter-spacing:0px;font-weight:normal;font-family:'Liberation Sans', sans-serif;transform:scaleX(0.913);transform-origin:left center;">3D Shell - Side Entity</div>
<svg class="s" style="left:256.50px;top:563.88px;" width="4" height="6" viewBox="0 0 4 6"><path d="M0 0 L3.5 3 L0 6 Z" fill="#333"/></svg>
<svg class="s" style="left:70.00px;top:582.12px;" width="12" height="12" viewBox="0 0 12 12"><path d="M6 1 L11.5 4.5 L11.5 7.5 L6 11 L0.5 7.5 L0.5 4.5 Z M0.5 4.5 L6 8 L11.5 4.5" fill="none" stroke="#333" stroke-width="1"/><path d="M3.8 4 L6 2.6 L8.2 4 L8.2 5.5 L6 6.8 L3.8 5.5 Z" fill="#333"/></svg>
<div class="t" style="left:88.20px;top:578.12px;font-size:10px;line-height:20px;color:#333;letter-spacing:0px;font-weight:normal;font-family:'Liberation Sans', sans-serif;transform:scaleX(0.913);transform-origin:left center;">3D Shell - Top/Bottom Entity</div>
<svg class="s" style="left:256.50px;top:585.12px;" width="4" height="6" viewBox="0 0 4 6"><path d="M0 0 L3.5 3 L0 6 Z" fill="#333"/></svg>
<div class="w" style="left:-108.90px;top:106.00px;font-size:11.6px;line-height:14.2px;color:#1e1e1e;mix-blend-mode:screen;transform-origin:0 11.5px;transform:rotate(-45deg);pointer-events:none;">ChenHaiQi<br>2026-03-30 14:41:17</div>
<div class="w" style="left:-108.90px;top:106.00px;font-size:11.6px;line-height:14.2px;color:rgba(0,0,0,0.028);transform-origin:0 11.5px;transform:rotate(-45deg);pointer-events:none;">ChenHaiQi<br>2026-03-30 14:41:17</div>
<div class="w" style="left:134.60px;top:106.00px;font-size:11.6px;line-height:14.2px;color:#1e1e1e;mix-blend-mode:screen;transform-origin:0 11.5px;transform:rotate(-45deg);pointer-events:none;">ChenHaiQi<br>2026-03-30 14:41:17</div>
<div class="w" style="left:134.60px;top:106.00px;font-size:11.6px;line-height:14.2px;color:rgba(0,0,0,0.028);transform-origin:0 11.5px;transform:rotate(-45deg);pointer-events:none;">ChenHaiQi<br>2026-03-30 14:41:17</div>
<div class="w" style="left:378.10px;top:106.00px;font-size:11.6px;line-height:14.2px;color:#1e1e1e;mix-blend-mode:screen;transform-origin:0 11.5px;transform:rotate(-45deg);pointer-events:none;">ChenHaiQi<br>2026-03-30 14:41:17</div>
<div class="w" style="left:378.10px;top:106.00px;font-size:11.6px;line-height:14.2px;color:rgba(0,0,0,0.028);transform-origin:0 11.5px;transform:rotate(-45deg);pointer-events:none;">ChenHaiQi<br>2026-03-30 14:41:17</div>
<div class="w" style="left:621.60px;top:106.00px;font-size:11.6px;line-height:14.2px;color:#1e1e1e;mix-blend-mode:screen;transform-origin:0 11.5px;transform:rotate(-45deg);pointer-events:none;">ChenHaiQi<br>2026-03-30 14:41:17</div>
<div class="w" style="left:621.60px;top:106.00px;font-size:11.6px;line-height:14.2px;color:rgba(0,0,0,0.028);transform-origin:0 11.5px;transform:rotate(-45deg);pointer-events:none;">ChenHaiQi<br>2026-03-30 14:41:17</div>
<div class="w" style="left:865.10px;top:106.00px;font-size:11.6px;line-height:14.2px;color:#1e1e1e;mix-blend-mode:screen;transform-origin:0 11.5px;transform:rotate(-45deg);pointer-events:none;">ChenHaiQi<br>2026-03-30 14:41:17</div>
<div class="w" style="left:865.10px;top:106.00px;font-size:11.6px;line-height:14.2px;color:rgba(0,0,0,0.028);transform-origin:0 11.5px;transform:rotate(-45deg);pointer-events:none;">ChenHaiQi<br>2026-03-30 14:41:17</div>
<div class="w" style="left:1108.60px;top:106.00px;font-size:11.6px;line-height:14.2px;color:#1e1e1e;mix-blend-mode:screen;transform-origin:0 11.5px;transform:rotate(-45deg);pointer-events:none;">ChenHaiQi<br>2026-03-30 14:41:17</div>
<div class="w" style="left:1108.60px;top:106.00px;font-size:11.6px;line-height:14.2px;color:rgba(0,0,0,0.028);transform-origin:0 11.5px;transform:rotate(-45deg);pointer-events:none;">ChenHaiQi<br>2026-03-30 14:41:17</div>
<div class="w" style="left:-108.90px;top:335.00px;font-size:11.6px;line-height:14.2px;color:#1e1e1e;mix-blend-mode:screen;transform-origin:0 11.5px;transform:rotate(-45deg);pointer-events:none;">ChenHaiQi<br>2026-03-30 14:41:17</div>
<div class="w" style="left:-108.90px;top:335.00px;font-size:11.6px;line-height:14.2px;color:rgba(0,0,0,0.028);transform-origin:0 11.5px;transform:rotate(-45deg);pointer-events:none;">ChenHaiQi<br>2026-03-30 14:41:17</div>
<div class="w" style="left:134.60px;top:335.00px;font-size:11.6px;line-height:14.2px;color:#1e1e1e;mix-blend-mode:screen;transform-origin:0 11.5px;transform:rotate(-45deg);pointer-events:none;">ChenHaiQi<br>2026-03-30 14:41:17</div>
<div class="w" style="left:134.60px;top:335.00px;font-size:11.6px;line-height:14.2px;color:rgba(0,0,0,0.028);transform-origin:0 11.5px;transform:rotate(-45deg);pointer-events:none;">ChenHaiQi<br>2026-03-30 14:41:17</div>
<div class="w" style="left:378.10px;top:335.00px;font-size:11.6px;line-height:14.2px;color:#1e1e1e;mix-blend-mode:screen;transform-origin:0 11.5px;transform:rotate(-45deg);pointer-events:none;">ChenHaiQi<br>2026-03-30 14:41:17</div>
<div class="w" style="left:378.10px;top:335.00px;font-size:11.6px;line-height:14.2px;color:rgba(0,0,0,0.028);transform-origin:0 11.5px;transform:rotate(-45deg);pointer-events:none;">ChenHaiQi<br>2026-03-30 14:41:17</div>
<div class="w" style="left:621.60px;top:335.00px;font-size:11.6px;line-height:14.2px;color:#1e1e1e;mix-blend-mode:screen;transform-origin:0 11.5px;transform:rotate(-45deg);pointer-events:none;">ChenHaiQi<br>2026-03-30 14:41:17</div>
<div class="w" style="left:621.60px;top:335.00px;font-size:11.6px;line-height:14.2px;color:rgba(0,0,0,0.028);transform-origin:0 11.5px;transform:rotate(-45deg);pointer-events:none;">ChenHaiQi<br>2026-03-30 14:41:17</div>
<div class="w" style="left:865.10px;top:335.00px;font-size:11.6px;line-height:14.2px;color:#1e1e1e;mix-blend-mode:screen;transform-origin:0 11.5px;transform:rotate(-45deg);pointer-events:none;">ChenHaiQi<br>2026-03-30 14:41:17</div>
<div class="w" style="left:865.10px;top:335.00px;font-size:11.6px;line-height:14.2px;color:rgba(0,0,0,0.028);transform-origin:0 11.5px;transform:rotate(-45deg);pointer-events:none;">ChenHaiQi<br>2026-03-30 14:41:17</div>
<div class="w" style="left:1108.60px;top:335.00px;font-size:11.6px;line-height:14.2px;color:#1e1e1e;mix-blend-mode:screen;transform-origin:0 11.5px;transform:rotate(-45deg);pointer-events:none;">ChenHaiQi<br>2026-03-30 14:41:17</div>
<div class="w" style="left:1108.60px;top:335.00px;font-size:11.6px;line-height:14.2px;color:rgba(0,0,0,0.028);transform-origin:0 11.5px;transform:rotate(-45deg);pointer-events:none;">ChenHaiQi<br>2026-03-30 14:41:17</div>
<div class="w" style="left:-108.90px;top:564.00px;font-size:11.6px;line-height:14.2px;color:#1e1e1e;mix-blend-mode:screen;transform-origin:0 11.5px;transform:rotate(-45deg);pointer-events:none;">ChenHaiQi<br>2026-03-30 14:41:17</div>
<div class="w" style="left:-108.90px;top:564.00px;font-size:11.6px;line-height:14.2px;color:rgba(0,0,0,0.028);transform-origin:0 11.5px;transform:rotate(-45deg);pointer-events:none;">ChenHaiQi<br>2026-03-30 14:41:17</div>
<div class="w" style="left:134.60px;top:564.00px;font-size:11.6px;line-height:14.2px;color:#1e1e1e;mix-blend-mode:screen;transform-origin:0 11.5px;transform:rotate(-45deg);pointer-events:none;">ChenHaiQi<br>2026-03-30 14:41:17</div>
<div class="w" style="left:134.60px;top:564.00px;font-size:11.6px;line-height:14.2px;color:rgba(0,0,0,0.028);transform-origin:0 11.5px;transform:rotate(-45deg);pointer-events:none;">ChenHaiQi<br>2026-03-30 14:41:17</div>
<div class="w" style="left:378.10px;top:564.00px;font-size:11.6px;line-height:14.2px;color:#1e1e1e;mix-blend-mode:screen;transform-origin:0 11.5px;transform:rotate(-45deg);pointer-events:none;">ChenHaiQi<br>2026-03-30 14:41:17</div>
<div class="w" style="left:378.10px;top:564.00px;font-size:11.6px;line-height:14.2px;color:rgba(0,0,0,0.028);transform-origin:0 11.5px;transform:rotate(-45deg);pointer-events:none;">ChenHaiQi<br>2026-03-30 14:41:17</div>
<div class="w" style="left:621.60px;top:564.00px;font-size:11.6px;line-height:14.2px;color:#1e1e1e;mix-blend-mode:screen;transform-origin:0 11.5px;transform:rotate(-45deg);pointer-events:none;">ChenHaiQi<br>2026-03-30 14:41:17</div>
<div class="w" style="left:621.60px;top:564.00px;font-size:11.6px;line-height:14.2px;color:rgba(0,0,0,0.028);transform-origin:0 11.5px;transform:rotate(-45deg);pointer-events:none;">ChenHaiQi<br>2026-03-30 14:41:17</div>
<div class="w" style="left:865.10px;top:564.00px;font-size:11.6px;line-height:14.2px;color:#1e1e1e;mix-blend-mode:screen;transform-origin:0 11.5px;transform:rotate(-45deg);pointer-events:none;">ChenHaiQi<br>2026-03-30 14:41:17</div>
<div class="w" style="left:865.10px;top:564.00px;font-size:11.6px;line-height:14.2px;color:rgba(0,0,0,0.028);transform-origin:0 11.5px;transform:rotate(-45deg);pointer-events:none;">ChenHaiQi<br>2026-03-30 14:41:17</div>
<div class="w" style="left:1108.60px;top:564.00px;font-size:11.6px;line-height:14.2px;color:#1e1e1e;mix-blend-mode:screen;transform-origin:0 11.5px;transform:rotate(-45deg);pointer-events:none;">ChenHaiQi<br>2026-03-30 14:41:17</div>
<div class="w" style="left:1108.60px;top:564.00px;font-size:11.6px;line-height:14.2px;color:rgba(0,0,0,0.028);transform-origin:0 11.5px;transform:rotate(-45deg);pointer-events:none;">ChenHaiQi<br>2026-03-30 14:41:17</div>
<svg class="s" style="left:0;top:0" width="1280" height="643"><polygon points="138.90,292.60 151.34,290.44 149.21,292.86 458.85,405.78 458.55,406.62 147.06,298.90 147.19,302.12" fill="#ef463b" stroke="#ef463b" stroke-width="0.3" stroke-linejoin="round"/></svg>
<svg class="s" style="left:0;top:0" width="1280" height="643"><polygon points="840.20,61.50 835.26,73.12 834.38,70.01 531.77,299.26 531.23,298.54 830.48,64.94 827.70,63.29" fill="#ef463b" stroke="#ef463b" stroke-width="0.3" stroke-linejoin="round"/></svg>
<svg class="s" style="left:0;top:0" width="1280" height="643"><polygon points="1059.80,107.30 1053.84,118.43 1053.24,115.26 606.54,395.78 606.06,395.02 1049.81,109.85 1047.19,107.97" fill="#ef463b" stroke="#ef463b" stroke-width="0.3" stroke-linejoin="round"/></svg>
</body></html>
